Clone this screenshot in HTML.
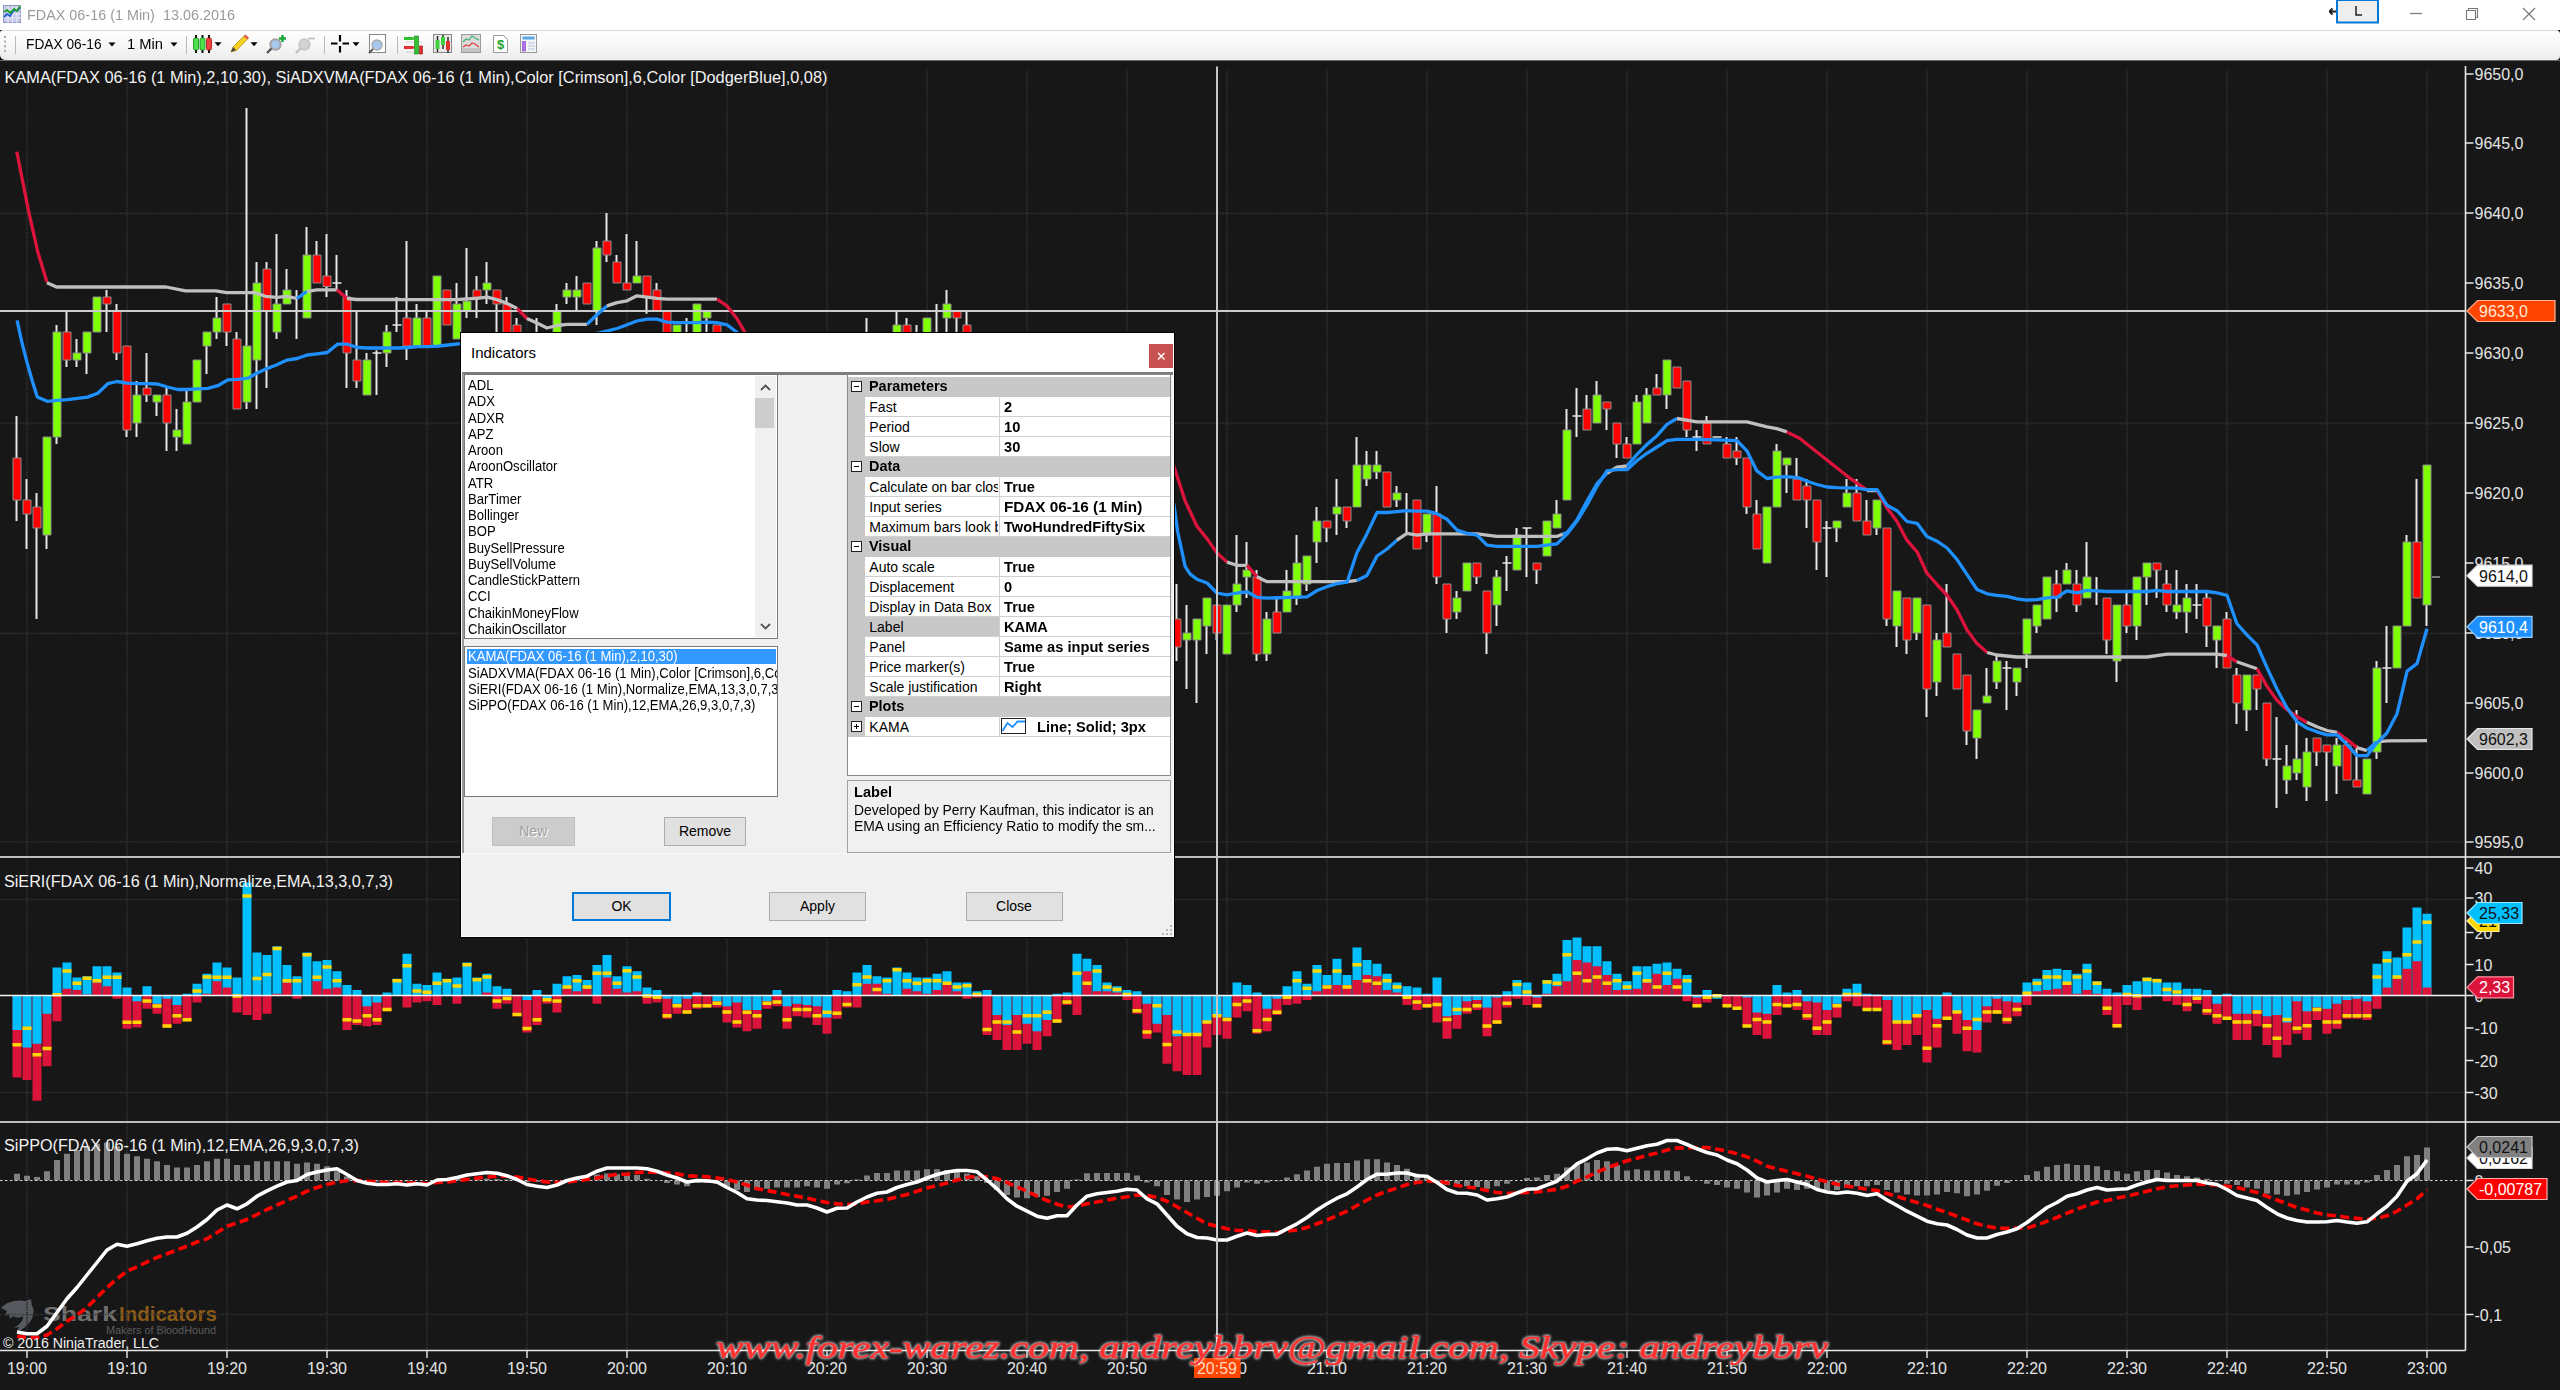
<!DOCTYPE html>
<html><head><meta charset="utf-8"><title>FDAX 06-16 (1 Min)</title>
<style>
html,body{margin:0;padding:0;}
body{width:2560px;height:1390px;overflow:hidden;background:#fff;position:relative;font-family:"Liberation Sans",sans-serif;}
#chart{position:absolute;left:0;top:0;}

#title{position:absolute;left:0;top:0;width:2560px;height:30px;background:#fff;}
#title .t{position:absolute;left:27px;top:4px;font-size:15px;line-height:22px;color:#9a9a9a;white-space:pre;transform-origin:0 50%;}
#tb{position:absolute;left:0;top:30px;width:2560px;height:30px;background:#000;}
#tb .bg{position:absolute;left:0;top:0;width:2560px;height:30px;border-top:1px solid #dcdcdc;box-sizing:border-box;background:linear-gradient(#fefefe,#f7f7f7 50%,#ebebeb);border-radius:3px 4px 4px 5px;}
#tb .tx{position:absolute;top:5px;font-size:15px;line-height:18px;color:#000;white-space:pre;transform-origin:0 50%;}
#tbsvg{position:absolute;left:0;top:0;}


#dlg{position:absolute;left:461px;top:333px;width:713px;height:604px;background:#f0f0f0;font-size:14px;color:#000;box-shadow:0 0 0 1px #000;}
#dlg:after{content:'';position:absolute;left:0;top:0;right:0;bottom:0;border:1px solid #fff;pointer-events:none;}
#dlg .abs{position:absolute;box-sizing:border-box;}
#dlg .ttl{left:0;top:0;width:713px;height:40px;background:#fff;}
#dlg .ttl span{position:absolute;left:10px;top:9.5px;font-size:15px;line-height:20px;}
#dlg .cls{left:688px;top:11px;width:24px;height:24px;background:#c75050;}
#dlg .lb{background:#fff;border:1px solid #7a7a7a;overflow:hidden;}
#dlg .it{position:absolute;left:3.2px;height:16.25px;line-height:16.25px;white-space:pre;transform:scaleX(0.935);transform-origin:0 50%;}
#dlg .btn{background:#e1e1e1;border:1px solid #adadad;text-align:center;line-height:26px;}
#dlg .pg{background:#fff;border:1px solid #8a8a8a;overflow:hidden;}
#dlg .row{position:absolute;left:0;width:323px;height:19px;background:#fff;border-bottom:1px solid #d0d0d0;}
#dlg .dv{position:absolute;left:151px;top:0;width:1px;height:19px;background:#d0d0d0;}
#dlg .cat{background:#c8c8c8;height:20px;border-bottom:0;}
#dlg .cat b{position:absolute;left:21px;top:-0.5px;line-height:20px;transform:scaleX(1.03);transform-origin:0 50%;white-space:pre;}
#dlg .mg{position:absolute;left:0;top:0;width:17px;height:20px;background:#c8c8c8;}
#dlg .nm{position:absolute;left:17px;top:0;width:132.5px;height:19px;background:#fff;overflow:hidden;white-space:pre;line-height:20px;text-indent:4px;}
#dlg .vl{position:absolute;left:152px;top:0;width:170px;height:19px;background:#fff;overflow:hidden;white-space:pre;line-height:20px;font-weight:bold;}
#dlg .vl span{position:absolute;left:4px;top:0;transform:scaleX(1.045);transform-origin:0 50%;}
#dlg .box{position:absolute;left:2.5px;top:4px;width:9px;height:9px;border:1px solid #222;background:#fff;}
#dlg .box:before{content:"";position:absolute;left:2px;top:4px;width:5px;height:1px;background:#000;}
#dlg .plus:after{content:"";position:absolute;left:4px;top:2px;width:1px;height:5px;background:#000;}

</style></head><body>
<svg id="chart" width="2560" height="1390" viewBox="0 0 2560 1390" shape-rendering="auto">
<rect x="0" y="60" width="2560" height="1330" fill="#171717"/>
<path d="M1 1308C6 1302 16 1299 25 1301L31 1299L32 1306C34 1309 34 1312 33 1314C33 1320 27 1326 21 1330L17 1332L19 1327L14 1328C20 1324 24 1320 23 1316C20 1318 16 1318 13 1316L10 1319L9 1314L5 1316L7 1311Z" fill="#565a5e"/>
<text x="43" y="1321" font-family="Liberation Sans, sans-serif" font-size="20.5" font-weight="bold" fill="#707070" textLength="74" lengthAdjust="spacingAndGlyphs">Shark</text>
<text x="119" y="1321" font-family="Liberation Sans, sans-serif" font-size="20.5" font-weight="bold" fill="#8a5a18" textLength="98" lengthAdjust="spacingAndGlyphs">Indicators</text>
<text x="106" y="1334" font-family="Liberation Sans, sans-serif" font-size="10.5" fill="#5c5c5c" textLength="110" lengthAdjust="spacingAndGlyphs">Makers of BloodHound</text>
<rect x="0" y="60" width="2560" height="1" fill="#6a6a6a"/>
<path d="M27 69.500V1350M127 69.500V1350M227 69.500V1350M327 69.500V1350M427 69.500V1350M527 69.500V1350M627 69.500V1350M727 69.500V1350M827 69.500V1350M927 69.500V1350M1027 69.500V1350M1127 69.500V1350M1227 69.500V1350M1327 69.500V1350M1427 69.500V1350M1527 69.500V1350M1627 69.500V1350M1727 69.500V1350M1827 69.500V1350M1927 69.500V1350M2027 69.500V1350M2127 69.500V1350M2227 69.500V1350M2327 69.500V1350M2427 69.500V1350" stroke="#2e2e2e" stroke-width="2" stroke-dasharray="1.25 1.25" fill="none"/>
<path d="M0 213.4H2465M0 423.4H2465M0 633.4H2465M0 842H2465M0 899.5H2465M0 1092.5H2465M0 1314.5H2465" stroke="#343434" stroke-width="1.6" stroke-dasharray="1.25 1.25" fill="none"/>
<path d="M14 1173.8h6V1180.5h-6zM24 1175.8h6V1180.5h-6zM34 1177h6V1180.5h-6zM44 1171.2h6V1180.5h-6zM54 1160h6V1180.5h-6zM64 1153.8h6V1180.5h-6zM74 1150h6V1180.5h-6zM84 1146.2h6V1180.5h-6zM94 1143.8h6V1180.5h-6zM104 1142.5h6V1180.5h-6zM114 1146.2h6V1180.5h-6zM124 1153.8h6V1180.5h-6zM134 1156.2h6V1180.5h-6zM144 1158.8h6V1180.5h-6zM154 1161.2h6V1180.5h-6zM164 1165h6V1180.5h-6zM174 1167.5h6V1180.5h-6zM184 1167.5h6V1180.5h-6zM194 1165h6V1180.5h-6zM204 1161.2h6V1180.5h-6zM214 1158.8h6V1180.5h-6zM224 1158.8h6V1180.5h-6zM234 1165h6V1180.5h-6zM244 1165h6V1180.5h-6zM254 1161.2h6V1180.5h-6zM264 1161.2h6V1180.5h-6zM274 1161.2h6V1180.5h-6zM284 1161.2h6V1180.5h-6zM294 1163.8h6V1180.5h-6zM304 1162.5h6V1180.5h-6zM314 1163.8h6V1180.5h-6zM324 1166.2h6V1180.5h-6zM334 1171.2h6V1180.5h-6zM344 1176.5h6V1180.5h-6zM374 1180.5h6V1181.5h-6zM384 1180.5h6V1181.5h-6zM394 1180.5h6V1181.5h-6zM404 1180.5h6V1181.5h-6zM444 1179.5h6V1180.5h-6zM454 1179h6V1180.5h-6zM464 1178.5h6V1180.5h-6zM474 1178.5h6V1180.5h-6zM484 1178.5h6V1180.5h-6zM494 1179h6V1180.5h-6zM504 1179.5h6V1180.5h-6zM524 1180.5h6V1182h-6zM534 1180.5h6V1182h-6zM544 1180.5h6V1182h-6zM564 1179.5h6V1180.5h-6zM574 1178h6V1180.5h-6zM584 1176.5h6V1180.5h-6zM594 1174.5h6V1180.5h-6zM604 1173.5h6V1180.5h-6zM614 1174.2h6V1180.5h-6zM624 1174.2h6V1180.5h-6zM634 1175h6V1180.5h-6zM644 1178.8h6V1180.5h-6zM664 1180.5h6V1183h-6zM674 1180.5h6V1184.5h-6zM684 1180.5h6V1186.2h-6zM694 1180.5h6V1182.5h-6zM704 1180.5h6V1183h-6zM714 1180.5h6V1183.8h-6zM724 1180.5h6V1186.8h-6zM734 1180.5h6V1190h-6zM744 1180.5h6V1192h-6zM754 1180.5h6V1190h-6zM764 1180.5h6V1188.8h-6zM774 1180.5h6V1187.5h-6zM784 1180.5h6V1187.5h-6zM794 1180.5h6V1187.5h-6zM804 1180.5h6V1186.2h-6zM814 1180.5h6V1187.5h-6zM824 1180.5h6V1188.8h-6zM834 1180.5h6V1184.5h-6zM844 1180.5h6V1183.2h-6zM854 1179.5h6V1180.5h-6zM864 1175.5h6V1180.5h-6zM874 1173h6V1180.5h-6zM884 1173h6V1180.5h-6zM894 1170.5h6V1180.5h-6zM904 1170.5h6V1180.5h-6zM914 1170.5h6V1180.5h-6zM924 1169.2h6V1180.5h-6zM934 1169.2h6V1180.5h-6zM944 1170h6V1180.5h-6zM954 1171.2h6V1180.5h-6zM964 1173.8h6V1180.5h-6zM974 1176.2h6V1180.5h-6zM984 1180.5h6V1183h-6zM994 1180.5h6V1190h-6zM1004 1180.5h6V1195h-6zM1014 1180.5h6V1197.5h-6zM1024 1180.5h6V1198.2h-6zM1034 1180.5h6V1197h-6zM1044 1180.5h6V1195.8h-6zM1054 1180.5h6V1192h-6zM1064 1180.5h6V1188.8h-6zM1074 1179.5h6V1180.5h-6zM1084 1173.2h6V1180.5h-6zM1094 1173h6V1180.5h-6zM1104 1173h6V1180.5h-6zM1114 1173h6V1180.5h-6zM1124 1173h6V1180.5h-6zM1134 1175.5h6V1180.5h-6zM1144 1180.5h6V1182.5h-6zM1154 1180.5h6V1186.2h-6zM1164 1180.5h6V1195h-6zM1174 1180.5h6V1199.5h-6zM1184 1180.5h6V1202h-6zM1194 1180.5h6V1199.5h-6zM1204 1180.5h6V1197h-6zM1214 1180.5h6V1195.8h-6zM1224 1180.5h6V1191.2h-6zM1234 1180.5h6V1187.5h-6zM1244 1180.5h6V1182.5h-6zM1254 1180.5h6V1183.8h-6zM1264 1180.5h6V1182.5h-6zM1274 1180.5h6V1181.2h-6zM1284 1177.5h6V1180.5h-6zM1294 1174.2h6V1180.5h-6zM1304 1170.5h6V1180.5h-6zM1314 1166.8h6V1180.5h-6zM1324 1163.8h6V1180.5h-6zM1334 1163h6V1180.5h-6zM1344 1163h6V1180.5h-6zM1354 1160.5h6V1180.5h-6zM1364 1159.2h6V1180.5h-6zM1374 1159.2h6V1180.5h-6zM1384 1162.5h6V1180.5h-6zM1394 1165h6V1180.5h-6zM1404 1168.8h6V1180.5h-6zM1414 1173.8h6V1180.5h-6zM1424 1176.2h6V1180.5h-6zM1434 1180.5h6V1182h-6zM1444 1180.5h6V1185h-6zM1454 1180.5h6V1186.2h-6zM1464 1180.5h6V1186.2h-6zM1474 1180.5h6V1187h-6zM1484 1180.5h6V1188.8h-6zM1494 1180.5h6V1186.2h-6zM1504 1180.5h6V1183.8h-6zM1524 1178h6V1180.5h-6zM1534 1177.5h6V1180.5h-6zM1544 1175h6V1180.5h-6zM1554 1173.8h6V1180.5h-6zM1564 1167.5h6V1180.5h-6zM1574 1165h6V1180.5h-6zM1584 1162.5h6V1180.5h-6zM1594 1160h6V1180.5h-6zM1604 1161.2h6V1180.5h-6zM1614 1165h6V1180.5h-6zM1624 1170.5h6V1180.5h-6zM1634 1169.2h6V1180.5h-6zM1644 1170.5h6V1180.5h-6zM1654 1170.5h6V1180.5h-6zM1664 1170.5h6V1180.5h-6zM1674 1171.2h6V1180.5h-6zM1684 1176.2h6V1180.5h-6zM1704 1180.5h6V1183.8h-6zM1714 1180.5h6V1185h-6zM1724 1180.5h6V1187.5h-6zM1734 1180.5h6V1188.8h-6zM1744 1180.5h6V1192.5h-6zM1754 1180.5h6V1197.5h-6zM1764 1180.5h6V1195.5h-6zM1774 1180.5h6V1192.5h-6zM1784 1180.5h6V1188.8h-6zM1794 1180.5h6V1190h-6zM1804 1180.5h6V1188.8h-6zM1814 1180.5h6V1190h-6zM1824 1180.5h6V1190h-6zM1834 1180.5h6V1190h-6zM1844 1180.5h6V1187.5h-6zM1854 1180.5h6V1186.2h-6zM1864 1180.5h6V1186.2h-6zM1874 1180.5h6V1185h-6zM1884 1180.5h6V1190h-6zM1894 1180.5h6V1192.5h-6zM1904 1180.5h6V1194.5h-6zM1914 1180.5h6V1195.5h-6zM1924 1180.5h6V1195.5h-6zM1934 1180.5h6V1194.5h-6zM1944 1180.5h6V1192h-6zM1954 1180.5h6V1193.2h-6zM1964 1180.5h6V1196.2h-6zM1974 1180.5h6V1194.5h-6zM1984 1180.5h6V1190.8h-6zM1994 1180.5h6V1185.8h-6zM2004 1180.5h6V1183h-6zM2024 1175h6V1180.5h-6zM2034 1171.2h6V1180.5h-6zM2044 1166.8h6V1180.5h-6zM2054 1165h6V1180.5h-6zM2064 1163.8h6V1180.5h-6zM2074 1165h6V1180.5h-6zM2084 1165h6V1180.5h-6zM2094 1166.2h6V1180.5h-6zM2104 1170h6V1180.5h-6zM2114 1171.2h6V1180.5h-6zM2124 1173.8h6V1180.5h-6zM2134 1171.2h6V1180.5h-6zM2144 1170h6V1180.5h-6zM2154 1170h6V1180.5h-6zM2164 1172.5h6V1180.5h-6zM2174 1175h6V1180.5h-6zM2184 1176.2h6V1180.5h-6zM2194 1177.5h6V1180.5h-6zM2204 1178.8h6V1180.5h-6zM2214 1180.5h6V1181.2h-6zM2224 1180.5h6V1183.8h-6zM2234 1180.5h6V1185h-6zM2244 1180.5h6V1187.5h-6zM2254 1180.5h6V1188.8h-6zM2264 1180.5h6V1193.8h-6zM2274 1180.5h6V1194.5h-6zM2284 1180.5h6V1195.8h-6zM2294 1180.5h6V1194.5h-6zM2304 1180.5h6V1192h-6zM2314 1180.5h6V1189.5h-6zM2324 1180.5h6V1187.5h-6zM2334 1180.5h6V1184.5h-6zM2344 1180.5h6V1184.5h-6zM2354 1180.5h6V1184.5h-6zM2364 1180.5h6V1182.5h-6zM2374 1175h6V1180.5h-6zM2384 1170h6V1180.5h-6zM2394 1165h6V1180.5h-6zM2404 1156.2h6V1180.5h-6zM2414 1155h6V1180.5h-6zM2424 1147.5h6V1180.5h-6z" fill="#808080"/>
<path d="M0 1180.5H2465" stroke="#d0d0d0" stroke-width="1.2" stroke-dasharray="2.5 2.5" fill="none"/>
<path d="M52.5 967.5h9V995.5h-9zM62.5 962.5h9V995.5h-9zM72.5 977.5h9V995.5h-9zM82.5 976.2h9V995.5h-9zM92.5 966.2h9V995.5h-9zM102.5 966.2h9V995.5h-9zM112.5 972.5h9V995.5h-9zM192.5 983.8h9V995.5h-9zM202.5 973.8h9V995.5h-9zM212.5 962.5h9V995.5h-9zM222.5 967.5h9V995.5h-9zM232.5 977.5h9V995.5h-9zM242.5 882.5h9V995.5h-9zM252.5 952.5h9V995.5h-9zM262.5 955h9V995.5h-9zM272.5 946.2h9V995.5h-9zM282.5 965h9V995.5h-9zM292.5 976.2h9V995.5h-9zM302.5 952.5h9V995.5h-9zM312.5 961.2h9V995.5h-9zM322.5 960h9V995.5h-9zM332.5 971.2h9V995.5h-9zM392.5 978.8h9V995.5h-9zM402.5 953.8h9V995.5h-9zM412.5 983.8h9V995.5h-9zM422.5 985h9V995.5h-9zM432.5 972.5h9V995.5h-9zM442.5 978.8h9V995.5h-9zM452.5 977.5h9V995.5h-9zM462.5 962.5h9V995.5h-9zM472.5 977.5h9V995.5h-9zM482.5 973.8h9V995.5h-9zM562.5 976.2h9V995.5h-9zM572.5 975h9V995.5h-9zM582.5 980h9V995.5h-9zM592.5 965h9V995.5h-9zM602.5 955h9V995.5h-9zM612.5 976.2h9V995.5h-9zM622.5 966.2h9V995.5h-9zM632.5 971.2h9V995.5h-9zM852.5 972.5h9V995.5h-9zM862.5 965h9V995.5h-9zM872.5 976.2h9V995.5h-9zM882.5 977.5h9V995.5h-9zM892.5 967.5h9V995.5h-9zM902.5 972.5h9V995.5h-9zM912.5 977.5h9V995.5h-9zM922.5 977.5h9V995.5h-9zM932.5 973.8h9V995.5h-9zM942.5 971.2h9V995.5h-9zM952.5 982.5h9V995.5h-9zM962.5 982.5h9V995.5h-9zM972.5 991.2h9V995.5h-9zM1072.5 953.8h9V995.5h-9zM1082.5 958.8h9V995.5h-9zM1092.5 965h9V995.5h-9zM1102.5 982.5h9V995.5h-9zM1112.5 986.2h9V995.5h-9zM1122.5 990h9V995.5h-9zM1292.5 971.2h9V995.5h-9zM1302.5 983.8h9V995.5h-9zM1312.5 965h9V995.5h-9zM1322.5 975h9V995.5h-9zM1332.5 958.8h9V995.5h-9zM1342.5 975h9V995.5h-9zM1352.5 947.5h9V995.5h-9zM1362.5 960h9V995.5h-9zM1372.5 963.8h9V995.5h-9zM1382.5 973.8h9V995.5h-9zM1392.5 982.5h9V995.5h-9zM1512.5 980h9V995.5h-9zM1522.5 982.5h9V995.5h-9zM1542.5 980h9V995.5h-9zM1552.5 973.8h9V995.5h-9zM1562.5 940h9V995.5h-9zM1572.5 937.5h9V995.5h-9zM1582.5 946.2h9V995.5h-9zM1592.5 946.2h9V995.5h-9zM1602.5 961.2h9V995.5h-9zM1612.5 973.8h9V995.5h-9zM1622.5 981.2h9V995.5h-9zM1632.5 966.2h9V995.5h-9zM1642.5 966.2h9V995.5h-9zM1652.5 963.8h9V995.5h-9zM1662.5 962.5h9V995.5h-9zM1672.5 968.8h9V995.5h-9zM1682.5 975h9V995.5h-9zM1712.5 995.5h9V998.8h-9zM1842.5 988.8h9V995.5h-9zM1852.5 983.8h9V995.5h-9zM2022.5 982.5h9V995.5h-9zM2032.5 978.8h9V995.5h-9zM2042.5 970h9V995.5h-9zM2052.5 968.8h9V995.5h-9zM2062.5 970h9V995.5h-9zM2072.5 973.8h9V995.5h-9zM2082.5 963.8h9V995.5h-9zM2092.5 981.2h9V995.5h-9zM2122.5 985h9V995.5h-9zM2142.5 977.5h9V995.5h-9zM2152.5 978.8h9V995.5h-9zM2162.5 982.5h9V995.5h-9zM2172.5 982.5h9V995.5h-9zM2372.5 963.8h9V995.5h-9zM2382.5 951.2h9V995.5h-9zM2392.5 957.5h9V995.5h-9zM2402.5 927.5h9V995.5h-9zM2412.5 907.5h9V995.5h-9zM2422.5 913.8h9V995.5h-9z" fill="#00BFFF"/>
<path d="M12.5 995.5h9V1077.5h-9zM22.5 995.5h9V1080h-9zM32.5 995.5h9V1100.8h-9zM42.5 995.5h9V1066.2h-9zM122.5 995.5h9V1028.8h-9zM132.5 995.5h9V1027.5h-9zM142.5 995.5h9V1008.8h-9zM152.5 995.5h9V1013.8h-9zM162.5 995.5h9V1027.5h-9zM172.5 995.5h9V1023.8h-9zM182.5 995.5h9V1021.2h-9zM342.5 995.5h9V1030h-9zM352.5 995.5h9V1025h-9zM362.5 995.5h9V1026.2h-9zM372.5 995.5h9V1025h-9zM382.5 995.5h9V1011.2h-9zM492.5 995.5h9V1008.8h-9zM502.5 995.5h9V1003.8h-9zM512.5 995.5h9V1016.2h-9zM522.5 995.5h9V1032.5h-9zM532.5 995.5h9V1025h-9zM542.5 995.5h9V1003.8h-9zM552.5 995.5h9V1012.5h-9zM642.5 995.5h9V1003.8h-9zM652.5 995.5h9V1002.5h-9zM662.5 995.5h9V1018.8h-9zM672.5 995.5h9V1013.8h-9zM682.5 995.5h9V1013.8h-9zM692.5 995.5h9V1008.8h-9zM702.5 995.5h9V1007.5h-9zM712.5 995.5h9V1007.5h-9zM722.5 995.5h9V1022.5h-9zM732.5 995.5h9V1027.5h-9zM742.5 995.5h9V1031.2h-9zM752.5 995.5h9V1028.8h-9zM762.5 995.5h9V1008.8h-9zM772.5 995.5h9V1006.2h-9zM782.5 995.5h9V1028.8h-9zM792.5 995.5h9V1016.2h-9zM802.5 995.5h9V1017.5h-9zM812.5 995.5h9V1025h-9zM822.5 995.5h9V1033.8h-9zM832.5 995.5h9V1018.8h-9zM842.5 995.5h9V1007.5h-9zM982.5 995.5h9V1035h-9zM992.5 995.5h9V1040h-9zM1002.5 995.5h9V1050h-9zM1012.5 995.5h9V1050h-9zM1022.5 995.5h9V1043.8h-9zM1032.5 995.5h9V1050h-9zM1042.5 995.5h9V1036.2h-9zM1052.5 995.5h9V1022.5h-9zM1062.5 995.5h9V1005h-9zM1132.5 995.5h9V1013.8h-9zM1142.5 995.5h9V1038.8h-9zM1152.5 995.5h9V1032.5h-9zM1162.5 995.5h9V1063.8h-9zM1172.5 995.5h9V1071.2h-9zM1182.5 995.5h9V1075h-9zM1192.5 995.5h9V1075h-9zM1202.5 995.5h9V1047.5h-9zM1212.5 995.5h9V1035h-9zM1222.5 995.5h9V1038.8h-9zM1232.5 995.5h9V1017.5h-9zM1242.5 995.5h9V1011.2h-9zM1252.5 995.5h9V1033.8h-9zM1262.5 995.5h9V1031.2h-9zM1272.5 995.5h9V1015h-9zM1282.5 995.5h9V1005h-9zM1402.5 995.5h9V1005h-9zM1412.5 995.5h9V1010h-9zM1422.5 995.5h9V1007.5h-9zM1432.5 995.5h9V1022.5h-9zM1442.5 995.5h9V1038.8h-9zM1452.5 995.5h9V1028.8h-9zM1462.5 995.5h9V1013.8h-9zM1472.5 995.5h9V1010h-9zM1482.5 995.5h9V1036.2h-9zM1492.5 995.5h9V1023.8h-9zM1502.5 995.5h9V1007.5h-9zM1532.5 995.5h9V1007.5h-9zM1692.5 995.5h9V1006.2h-9zM1702.5 995.5h9V1002.5h-9zM1722.5 995.5h9V1006.2h-9zM1732.5 995.5h9V1008.8h-9zM1742.5 995.5h9V1026.2h-9zM1752.5 995.5h9V1035h-9zM1762.5 995.5h9V1038.8h-9zM1772.5 995.5h9V1015h-9zM1782.5 995.5h9V1006.2h-9zM1792.5 995.5h9V1010h-9zM1802.5 995.5h9V1020h-9zM1812.5 995.5h9V1035h-9zM1822.5 995.5h9V1035h-9zM1832.5 995.5h9V1017.5h-9zM1862.5 995.5h9V1010h-9zM1872.5 995.5h9V1010h-9zM1882.5 995.5h9V1045h-9zM1892.5 995.5h9V1050h-9zM1902.5 995.5h9V1045h-9zM1912.5 995.5h9V1035h-9zM1922.5 995.5h9V1062.5h-9zM1932.5 995.5h9V1047.5h-9zM1942.5 995.5h9V1020h-9zM1952.5 995.5h9V1033.8h-9zM1962.5 995.5h9V1051.2h-9zM1972.5 995.5h9V1052.5h-9zM1982.5 995.5h9V1022.5h-9zM1992.5 995.5h9V1013.8h-9zM2002.5 995.5h9V1023.8h-9zM2012.5 995.5h9V1016.2h-9zM2102.5 995.5h9V1015h-9zM2112.5 995.5h9V1027.5h-9zM2132.5 995.5h9V1010h-9zM2182.5 995.5h9V1011.2h-9zM2192.5 995.5h9V1003.8h-9zM2202.5 995.5h9V1015h-9zM2212.5 995.5h9V1023.8h-9zM2222.5 995.5h9V1020h-9zM2232.5 995.5h9V1040h-9zM2242.5 995.5h9V1040h-9zM2252.5 995.5h9V1026.2h-9zM2262.5 995.5h9V1045h-9zM2272.5 995.5h9V1057.5h-9zM2282.5 995.5h9V1045h-9zM2292.5 995.5h9V1033.8h-9zM2302.5 995.5h9V1040h-9zM2312.5 995.5h9V1020h-9zM2322.5 995.5h9V1033.8h-9zM2332.5 995.5h9V1028.8h-9zM2342.5 995.5h9V1018.8h-9zM2352.5 995.5h9V1018.8h-9zM2362.5 995.5h9V1020h-9z" fill="#DC143C"/>
<path d="M12.5 995.5h9V1030h-9zM22.5 995.5h9V1047.5h-9zM32.5 995.5h9V1043.8h-9zM42.5 995.5h9V1013.8h-9zM122.5 987.5h9V995.5h-9zM132.5 995.5h9V1001.2h-9zM142.5 986.2h9V995.5h-9zM152.5 995.5h9V1003.8h-9zM162.5 995.5h9V998.8h-9zM172.5 995.5h9V1005h-9zM182.5 993.8h9V995.5h-9zM342.5 985h9V995.5h-9zM352.5 990h9V995.5h-9zM362.5 995.5h9V1006.2h-9zM372.5 995.5h9V1002.5h-9zM382.5 992.5h9V995.5h-9zM492.5 986.2h9V995.5h-9zM502.5 988.8h9V995.5h-9zM522.5 995.5h9V1000h-9zM532.5 990h9V995.5h-9zM542.5 995.5h9V998.8h-9zM552.5 983.8h9V995.5h-9zM642.5 987.5h9V995.5h-9zM652.5 990h9V995.5h-9zM662.5 995.5h9V998.8h-9zM672.5 995.5h9V1003.8h-9zM682.5 995.5h9V998.8h-9zM692.5 992.5h9V995.5h-9zM712.5 995.5h9V1001.2h-9zM722.5 995.5h9V1006.2h-9zM732.5 995.5h9V1002.5h-9zM742.5 995.5h9V1010h-9zM752.5 995.5h9V1010h-9zM762.5 995.5h9V1001.2h-9zM772.5 990h9V995.5h-9zM782.5 995.5h9V1006.2h-9zM792.5 995.5h9V1003.8h-9zM802.5 995.5h9V1005h-9zM812.5 995.5h9V1006.2h-9zM822.5 995.5h9V1017.5h-9zM832.5 990h9V995.5h-9zM842.5 991.2h9V995.5h-9zM982.5 990h9V995.5h-9zM992.5 995.5h9V1015h-9zM1002.5 995.5h9V1025h-9zM1012.5 995.5h9V1015h-9zM1022.5 995.5h9V1023.8h-9zM1032.5 995.5h9V1031.2h-9zM1042.5 995.5h9V1020h-9zM1052.5 993.8h9V995.5h-9zM1062.5 992.5h9V995.5h-9zM1132.5 991.2h9V995.5h-9zM1142.5 995.5h9V1003.8h-9zM1152.5 995.5h9V1023.8h-9zM1162.5 995.5h9V1015h-9zM1172.5 995.5h9V1036.2h-9zM1182.5 995.5h9V1033.8h-9zM1192.5 995.5h9V1033.8h-9zM1202.5 995.5h9V1022.5h-9zM1212.5 995.5h9V1015h-9zM1222.5 995.5h9V1017.5h-9zM1232.5 982.5h9V995.5h-9zM1242.5 985h9V995.5h-9zM1252.5 992.5h9V995.5h-9zM1262.5 995.5h9V1008.8h-9zM1272.5 995.5h9V998.8h-9zM1282.5 986.2h9V995.5h-9zM1402.5 986.2h9V995.5h-9zM1412.5 987.5h9V995.5h-9zM1422.5 993.8h9V995.5h-9zM1432.5 977.5h9V995.5h-9zM1442.5 995.5h9V1016.2h-9zM1452.5 995.5h9V1015h-9zM1462.5 995.5h9V1001.2h-9zM1472.5 995.5h9V1000h-9zM1482.5 995.5h9V1007.5h-9zM1492.5 995.5h9V997.5h-9zM1502.5 991.2h9V995.5h-9zM1532.5 995.5h9V997.5h-9zM1692.5 995.5h9V997.5h-9zM1702.5 990h9V995.5h-9zM1742.5 995.5h9V997.5h-9zM1752.5 995.5h9V1012.5h-9zM1762.5 995.5h9V1013.8h-9zM1772.5 985h9V995.5h-9zM1782.5 992.5h9V995.5h-9zM1792.5 990h9V995.5h-9zM1802.5 995.5h9V1001.2h-9zM1812.5 995.5h9V1002.5h-9zM1822.5 995.5h9V1010h-9zM1832.5 995.5h9V1003.8h-9zM1862.5 993.8h9V995.5h-9zM1872.5 994.5h9V995.5h-9zM1882.5 995.5h9V1000h-9zM1892.5 995.5h9V1021.2h-9zM1902.5 995.5h9V1021.2h-9zM1912.5 995.5h9V1015h-9zM1922.5 995.5h9V1010h-9zM1932.5 995.5h9V1018.8h-9zM1942.5 992.5h9V995.5h-9zM1952.5 995.5h9V1012.5h-9zM1962.5 995.5h9V1020h-9zM1972.5 995.5h9V1030h-9zM1982.5 995.5h9V1006.2h-9zM1992.5 995.5h9V998.8h-9zM2002.5 995.5h9V1001.2h-9zM2012.5 995.5h9V1002.5h-9zM2102.5 988.8h9V995.5h-9zM2112.5 992.5h9V995.5h-9zM2132.5 981.2h9V995.5h-9zM2182.5 988.8h9V995.5h-9zM2192.5 988.8h9V995.5h-9zM2202.5 990h9V995.5h-9zM2212.5 995.5h9V1003.8h-9zM2222.5 993.8h9V995.5h-9zM2232.5 995.5h9V1013.8h-9zM2242.5 995.5h9V1013.8h-9zM2252.5 995.5h9V1010h-9zM2262.5 995.5h9V1016.2h-9zM2272.5 995.5h9V1015h-9zM2282.5 995.5h9V1022.5h-9zM2292.5 995.5h9V1001.2h-9zM2302.5 995.5h9V1011.2h-9zM2312.5 995.5h9V1007.5h-9zM2322.5 995.5h9V1008.8h-9zM2332.5 995.5h9V1003.8h-9zM2342.5 995.5h9V1000h-9zM2352.5 995.5h9V998.8h-9zM2362.5 995.5h9V1001.2h-9z" fill="#00BFFF"/>
<path d="M52.5 995.5h9V1021.2h-9zM62.5 988.8h9V995.5h-9zM72.5 990h9V995.5h-9zM82.5 994.5h9V995.5h-9zM92.5 982.5h9V995.5h-9zM102.5 986.2h9V995.5h-9zM112.5 995.5h9V998.8h-9zM192.5 995.5h9V1002.5h-9zM202.5 993.8h9V995.5h-9zM212.5 981.2h9V995.5h-9zM222.5 987.5h9V995.5h-9zM232.5 995.5h9V1012.5h-9zM242.5 995.5h9V1015h-9zM252.5 995.5h9V1020h-9zM262.5 995.5h9V1013.8h-9zM272.5 993.8h9V995.5h-9zM282.5 982.5h9V995.5h-9zM292.5 995.5h9V998.8h-9zM312.5 981.2h9V995.5h-9zM322.5 988.8h9V995.5h-9zM332.5 987.5h9V995.5h-9zM402.5 995.5h9V1007.5h-9zM412.5 995.5h9V1002.5h-9zM422.5 995.5h9V1001.2h-9zM432.5 995.5h9V1005h-9zM452.5 995.5h9V1003.8h-9zM482.5 992.5h9V995.5h-9zM562.5 988.8h9V995.5h-9zM572.5 991.2h9V995.5h-9zM582.5 988.8h9V995.5h-9zM592.5 995.5h9V1003.8h-9zM602.5 977.5h9V995.5h-9zM612.5 988.8h9V995.5h-9zM622.5 992.5h9V995.5h-9zM632.5 991.2h9V995.5h-9zM852.5 995.5h9V1007.5h-9zM862.5 983.8h9V995.5h-9zM872.5 983.8h9V995.5h-9zM882.5 993.8h9V995.5h-9zM902.5 988.8h9V995.5h-9zM912.5 991.2h9V995.5h-9zM922.5 993.8h9V995.5h-9zM932.5 990h9V995.5h-9zM942.5 985h9V995.5h-9zM952.5 991.2h9V995.5h-9zM962.5 995.5h9V998.8h-9zM972.5 995.5h9V997.5h-9zM1072.5 995.5h9V1015h-9zM1082.5 971.2h9V995.5h-9zM1092.5 991.2h9V995.5h-9zM1102.5 991.2h9V995.5h-9zM1112.5 992.5h9V995.5h-9zM1122.5 995.5h9V1000h-9zM1292.5 995.5h9V1003.8h-9zM1302.5 995.5h9V1000h-9zM1312.5 991.2h9V995.5h-9zM1322.5 985h9V995.5h-9zM1332.5 985h9V995.5h-9zM1342.5 985h9V995.5h-9zM1352.5 980h9V995.5h-9zM1362.5 975h9V995.5h-9zM1372.5 976.2h9V995.5h-9zM1382.5 990h9V995.5h-9zM1392.5 992.5h9V995.5h-9zM1512.5 995.5h9V998.8h-9zM1522.5 995.5h9V1005h-9zM1542.5 993.8h9V995.5h-9zM1552.5 986.2h9V995.5h-9zM1562.5 981.2h9V995.5h-9zM1572.5 960h9V995.5h-9zM1582.5 962.5h9V995.5h-9zM1592.5 966.2h9V995.5h-9zM1602.5 975h9V995.5h-9zM1612.5 990h9V995.5h-9zM1622.5 990h9V995.5h-9zM1632.5 988.8h9V995.5h-9zM1642.5 982.5h9V995.5h-9zM1652.5 973.8h9V995.5h-9zM1662.5 985h9V995.5h-9zM1672.5 978.8h9V995.5h-9zM1682.5 995.5h9V1001.2h-9zM1842.5 995.5h9V1001.2h-9zM1852.5 995.5h9V1006.2h-9zM2022.5 995.5h9V1005h-9zM2032.5 991.2h9V995.5h-9zM2042.5 990h9V995.5h-9zM2052.5 988.8h9V995.5h-9zM2062.5 985h9V995.5h-9zM2072.5 993.8h9V995.5h-9zM2082.5 990h9V995.5h-9zM2092.5 993.8h9V995.5h-9zM2122.5 995.5h9V1005h-9zM2142.5 995.5h9V997.5h-9zM2162.5 995.5h9V1001.2h-9zM2172.5 995.5h9V1005h-9zM2372.5 995.5h9V1008.8h-9zM2382.5 987.5h9V995.5h-9zM2392.5 978.8h9V995.5h-9zM2402.5 968.8h9V995.5h-9zM2412.5 961.2h9V995.5h-9zM2422.5 987.5h9V995.5h-9z" fill="#DC143C"/>
<path d="M12.5 1043h9v3.5h-9zM22.5 1026.5h9v3.5h-9zM32.5 1053h9v3.5h-9zM42.5 1046.8h9v3.5h-9zM52.5 993h9v3.5h-9zM62.5 969.2h9v3.5h-9zM72.5 981.5h9v3.5h-9zM82.5 976.5h9v3.5h-9zM92.5 979h9v3.5h-9zM102.5 975.5h9v3.5h-9zM112.5 975.5h9v3.5h-9zM122.5 1020.5h9v3.5h-9zM132.5 1020.5h9v3.5h-9zM142.5 999.2h9v3.5h-9zM152.5 1004.2h9v3.5h-9zM162.5 1024.2h9v3.5h-9zM172.5 1014h9v3.5h-9zM182.5 1018h9v3.5h-9zM192.5 989.2h9v3.5h-9zM202.5 975.2h9v3.5h-9zM212.5 975.5h9v3.5h-9zM222.5 975.5h9v3.5h-9zM232.5 994.2h9v3.5h-9zM242.5 894.2h9v3.5h-9zM252.5 976.8h9v3.5h-9zM262.5 972.8h9v3.5h-9zM272.5 946.8h9v3.5h-9zM282.5 979h9v3.5h-9zM292.5 979h9v3.5h-9zM302.5 953h9v3.5h-9zM312.5 975.5h9v3.5h-9zM322.5 965.2h9v3.5h-9zM332.5 979h9v3.5h-9zM342.5 1018h9v3.5h-9zM352.5 1019.2h9v3.5h-9zM362.5 1014h9v3.5h-9zM372.5 1018h9v3.5h-9zM382.5 1007.8h9v3.5h-9zM392.5 979h9v3.5h-9zM402.5 964h9v3.5h-9zM412.5 989.2h9v3.5h-9zM422.5 990.5h9v3.5h-9zM432.5 981.5h9v3.5h-9zM442.5 979h9v3.5h-9zM452.5 984.2h9v3.5h-9zM462.5 963h9v3.5h-9zM472.5 978h9v3.5h-9zM482.5 975.2h9v3.5h-9zM492.5 999.2h9v3.5h-9zM502.5 996.8h9v3.5h-9zM512.5 1012.8h9v3.5h-9zM522.5 1026.8h9v3.5h-9zM532.5 1018h9v3.5h-9zM542.5 998h9v3.5h-9zM552.5 999.2h9v3.5h-9zM562.5 985.2h9v3.5h-9zM572.5 979h9v3.5h-9zM582.5 985.2h9v3.5h-9zM592.5 971.5h9v3.5h-9zM602.5 971.5h9v3.5h-9zM612.5 981.5h9v3.5h-9zM622.5 969h9v3.5h-9zM632.5 975.2h9v3.5h-9zM642.5 994.2h9v3.5h-9zM652.5 995.5h9v3.5h-9zM662.5 1014h9v3.5h-9zM672.5 1004h9v3.5h-9zM682.5 1010.2h9v3.5h-9zM692.5 1004h9v3.5h-9zM702.5 1004h9v3.5h-9zM712.5 1001.5h9v3.5h-9zM722.5 1010.2h9v3.5h-9zM732.5 1020.2h9v3.5h-9zM742.5 1010.5h9v3.5h-9zM752.5 1014h9v3.5h-9zM762.5 1001.5h9v3.5h-9zM772.5 1000.2h9v3.5h-9zM782.5 1018h9v3.5h-9zM792.5 1007.8h9v3.5h-9zM802.5 1007.8h9v3.5h-9zM812.5 1014h9v3.5h-9zM822.5 1010.5h9v3.5h-9zM832.5 1011.5h9v3.5h-9zM842.5 1002.8h9v3.5h-9zM852.5 983h9v3.5h-9zM862.5 975.2h9v3.5h-9zM872.5 987.8h9v3.5h-9zM882.5 979h9v3.5h-9zM892.5 968h9v3.5h-9zM902.5 979h9v3.5h-9zM912.5 981.5h9v3.5h-9zM922.5 979h9v3.5h-9zM932.5 979h9v3.5h-9zM942.5 981.5h9v3.5h-9zM952.5 985.2h9v3.5h-9zM962.5 984h9v3.5h-9zM972.5 992.8h9v3.5h-9zM982.5 1027.8h9v3.5h-9zM992.5 1020.2h9v3.5h-9zM1002.5 1020.2h9v3.5h-9zM1012.5 1030.2h9v3.5h-9zM1022.5 1014h9v3.5h-9zM1032.5 1014h9v3.5h-9zM1042.5 1010.5h9v3.5h-9zM1052.5 1019.2h9v3.5h-9zM1062.5 1000.2h9v3.5h-9zM1072.5 971.5h9v3.5h-9zM1082.5 981.5h9v3.5h-9zM1092.5 969.2h9v3.5h-9zM1102.5 985.2h9v3.5h-9zM1112.5 987.8h9v3.5h-9zM1122.5 992.8h9v3.5h-9zM1132.5 1009h9v3.5h-9zM1142.5 1030.2h9v3.5h-9zM1152.5 1004h9v3.5h-9zM1162.5 1042.8h9v3.5h-9zM1172.5 1030.2h9v3.5h-9zM1182.5 1032.8h9v3.5h-9zM1192.5 1032.8h9v3.5h-9zM1202.5 1020.2h9v3.5h-9zM1212.5 1014h9v3.5h-9zM1222.5 1017.8h9v3.5h-9zM1232.5 1002.8h9v3.5h-9zM1242.5 999.2h9v3.5h-9zM1252.5 1029h9v3.5h-9zM1262.5 1017.8h9v3.5h-9zM1272.5 1010.5h9v3.5h-9zM1282.5 995.5h9v3.5h-9zM1292.5 979h9v3.5h-9zM1302.5 986.5h9v3.5h-9zM1312.5 969.2h9v3.5h-9zM1322.5 985.2h9v3.5h-9zM1332.5 969.2h9v3.5h-9zM1342.5 985.2h9v3.5h-9zM1352.5 963h9v3.5h-9zM1362.5 979h9v3.5h-9zM1372.5 981.5h9v3.5h-9zM1382.5 979h9v3.5h-9zM1392.5 985.2h9v3.5h-9zM1402.5 995.5h9v3.5h-9zM1412.5 1000.2h9v3.5h-9zM1422.5 1004h9v3.5h-9zM1432.5 1002.8h9v3.5h-9zM1442.5 1017.8h9v3.5h-9zM1452.5 1007.8h9v3.5h-9zM1462.5 1007.8h9v3.5h-9zM1472.5 1004h9v3.5h-9zM1482.5 1024.2h9v3.5h-9zM1492.5 1020.2h9v3.5h-9zM1502.5 1001.5h9v3.5h-9zM1512.5 982.8h9v3.5h-9zM1522.5 990.2h9v3.5h-9zM1532.5 1004h9v3.5h-9zM1542.5 980.2h9v3.5h-9zM1552.5 981.5h9v3.5h-9zM1562.5 953h9v3.5h-9zM1572.5 971.5h9v3.5h-9zM1582.5 979h9v3.5h-9zM1592.5 975.2h9v3.5h-9zM1602.5 981.5h9v3.5h-9zM1612.5 979h9v3.5h-9zM1622.5 985.2h9v3.5h-9zM1632.5 971.5h9v3.5h-9zM1642.5 979h9v3.5h-9zM1652.5 985.2h9v3.5h-9zM1662.5 971.5h9v3.5h-9zM1672.5 985.2h9v3.5h-9zM1682.5 979h9v3.5h-9zM1692.5 1004h9v3.5h-9zM1702.5 995.5h9v3.5h-9zM1712.5 994h9v3.5h-9zM1722.5 1004h9v3.5h-9zM1732.5 1006.5h9v3.5h-9zM1742.5 1024.2h9v3.5h-9zM1752.5 1017.8h9v3.5h-9zM1762.5 1020.2h9v3.5h-9zM1772.5 1002.8h9v3.5h-9zM1782.5 1004h9v3.5h-9zM1792.5 1002.8h9v3.5h-9zM1802.5 1014h9v3.5h-9zM1812.5 1026.5h9v3.5h-9zM1822.5 1020.2h9v3.5h-9zM1832.5 1004h9v3.5h-9zM1842.5 992.8h9v3.5h-9zM1852.5 992.8h9v3.5h-9zM1862.5 1007.8h9v3.5h-9zM1872.5 1007.8h9v3.5h-9zM1882.5 1040.2h9v3.5h-9zM1892.5 1020.2h9v3.5h-9zM1902.5 1020.2h9v3.5h-9zM1912.5 1014h9v3.5h-9zM1922.5 1046.5h9v3.5h-9zM1932.5 1024h9v3.5h-9zM1942.5 1016.5h9v3.5h-9zM1952.5 1010.2h9v3.5h-9zM1962.5 1026.5h9v3.5h-9zM1972.5 1017.8h9v3.5h-9zM1982.5 1010.2h9v3.5h-9zM1992.5 1010.2h9v3.5h-9zM2002.5 1017.8h9v3.5h-9zM2012.5 1007.8h9v3.5h-9zM2022.5 991.5h9v3.5h-9zM2032.5 981.5h9v3.5h-9zM2042.5 975.2h9v3.5h-9zM2052.5 975.2h9v3.5h-9zM2062.5 981.5h9v3.5h-9zM2072.5 975.2h9v3.5h-9zM2082.5 969.2h9v3.5h-9zM2092.5 981.5h9v3.5h-9zM2102.5 1006.5h9v3.5h-9zM2112.5 1024h9v3.5h-9zM2122.5 992.8h9v3.5h-9zM2132.5 994h9v3.5h-9zM2142.5 977.8h9v3.5h-9zM2152.5 979h9v3.5h-9zM2162.5 987.8h9v3.5h-9zM2172.5 990.2h9v3.5h-9zM2182.5 1002.8h9v3.5h-9zM2192.5 996.5h9v3.5h-9zM2202.5 1009h9v3.5h-9zM2212.5 1014h9v3.5h-9zM2222.5 1016.5h9v3.5h-9zM2232.5 1020.2h9v3.5h-9zM2242.5 1020.2h9v3.5h-9zM2252.5 1010.2h9v3.5h-9zM2262.5 1024h9v3.5h-9zM2272.5 1036.5h9v3.5h-9zM2282.5 1017.8h9v3.5h-9zM2292.5 1026.5h9v3.5h-9zM2302.5 1024h9v3.5h-9zM2312.5 1007.8h9v3.5h-9zM2322.5 1020.2h9v3.5h-9zM2332.5 1020.2h9v3.5h-9zM2342.5 1014h9v3.5h-9zM2352.5 1014h9v3.5h-9zM2362.5 1014h9v3.5h-9zM2372.5 975.2h9v3.5h-9zM2382.5 959h9v3.5h-9zM2392.5 975.2h9v3.5h-9zM2402.5 953h9v3.5h-9zM2412.5 940.2h9v3.5h-9zM2422.5 920.5h9v3.5h-9z" fill="#FFD700"/>
<path d="M0 995.5H2465" stroke="#f4f4f4" stroke-width="1.6" fill="none"/>
<path d="M16.5 416V521M26.5 479V549M36.5 493V619M46.5 437V549M56.5 325V444M66.5 311V367M76.5 339V367M86.5 332V374M96.5 297V332M106.5 290V332M116.5 304V360M126.5 346V437M136.5 381V437M146.5 353V402M156.5 395V416M166.5 388V451M176.5 409V451M186.5 388V444M196.5 360V402M206.5 332V374M216.5 297V339M226.5 304V346M236.5 332V409M246.5 108V409M256.5 262V409M266.5 262V388M276.5 234V339M286.5 269V304M296.5 290V339M306.5 227V318M316.5 241V283M326.5 234V297M336.5 255V290M346.5 290V388M356.5 311V388M366.5 353V395M376.5 350.2V395M386.5 325V367M396.5 297V332M406.5 241V360M416.5 304V346M426.5 311V346M436.5 276V346M446.5 290V325M456.5 283V339M466.5 248V318M476.5 276V318M486.5 262V304M496.5 290V353M506.5 297V374M516.5 318V367M526.5 339V381M536.5 318V381M546.5 339V374M556.5 304V374M566.5 283V304M576.5 276V311M586.5 283V304M596.5 241V325M606.5 213V262M616.5 255V283M626.5 234V290M636.5 241V283M646.5 276V313.8M656.5 283V311M666.5 311V374M676.5 325V367M686.5 318V374M696.5 304V353M706.5 311V346M716.5 325V346M866.5 318V367M896.5 311V360M906.5 318V360M916.5 325V360M926.5 318V353M936.5 304V353M946.5 290V339M956.5 311V332M966.5 311V353M976.5 332V360M1176.5 584V661M1186.5 605V689M1196.5 619V703M1206.5 598V654M1216.5 605V640M1226.5 605V654M1236.5 535V612M1246.5 542V598M1256.5 570V661M1266.5 612V661M1276.5 598V633M1286.5 570V612M1296.5 535V605M1306.5 556V591M1316.5 507V563M1326.5 521V542M1336.5 479V535M1346.5 507V528M1356.5 437V507M1366.5 451V486M1376.5 451V479M1386.5 472V507M1396.5 486V507M1406.5 493V535M1416.5 500V549M1426.5 514V542M1436.5 486V584M1446.5 584V633M1456.5 591V619M1466.5 563V591M1476.5 563V584M1486.5 591V654M1496.5 570V626M1506.5 556V591M1516.5 528V570M1526.5 528V577M1536.5 563V584M1546.5 521V556M1556.5 500V528M1566.5 409V500M1576.5 388V437M1586.5 395V430M1596.5 381V423M1606.5 402V430M1616.5 423V458M1626.5 437V458M1636.5 395V444M1646.5 388V423M1656.5 374V395M1666.5 360V409M1676.5 367V388M1686.5 381V437M1696.5 430V451M1706.5 416V444M1716.5 437V437M1726.5 437V458M1736.5 437V465M1746.5 458V514M1756.5 500V549M1766.5 507V563M1776.5 444V507M1786.5 458V493M1796.5 458V500M1806.5 479V528M1816.5 500V570M1826.5 521V577M1836.5 521V542M1846.5 479V507M1856.5 479V521M1866.5 500V535M1876.5 500V535M1886.5 528V626M1896.5 591V647M1906.5 598V654M1916.5 598V640M1926.5 605V717M1936.5 633V696M1946.5 584V647M1956.5 654V689M1966.5 675V745M1976.5 710V759M1986.5 668V703M1996.5 654V689M2006.5 661V710M2016.5 668V696M2026.5 619V668M2036.5 605V633M2046.5 577V619M2056.5 570V612M2066.5 563V584M2076.5 570V612M2086.5 542V598M2096.5 577V605M2106.5 598V654M2116.5 605V682M2126.5 591V633M2136.5 577V640M2146.5 563V605M2156.5 563V598M2166.5 570V612M2176.5 570V619M2186.5 584V633M2196.5 584V619M2206.5 591V647M2216.5 626V668M2226.5 612V668M2236.5 668V724M2246.5 675V731M2256.5 675V710M2266.5 703V766M2276.5 717V808M2286.5 745V794M2296.5 710V780M2306.5 738V801M2316.5 738V766M2326.5 745V801M2336.5 738V794M2346.5 738V780M2356.5 745V787M2366.5 759V794M2376.5 661V759M2386.5 626V703M2396.5 626V668M2406.5 535V626M2416.5 479V598M2426.5 465V626" stroke="#e6e6e6" stroke-width="2" fill="none"/>
<path d="M292.5 311h9M332.5 283h9M372.5 353h9M392.5 325h9M1402.5 511.2h9M1502.5 563h9M1522.5 528h9M1572.5 416h9M1692.5 437h9M1712.5 437h9M1822.5 528h9M2002.5 668h9M2092.5 591h9M2192.5 605h9M2272.5 759h9M2382.5 668h9" stroke="#e6e6e6" stroke-width="1.6" fill="none"/>
<path d="M43 437h8V535h-8zM53 332h8V437h-8zM73 353h8V360h-8zM83 332h8V353h-8zM93 297h8V332h-8zM133 395h8V423h-8zM153 395h8V402h-8zM173 430h8V437h-8zM183 402h8V444h-8zM193 360h8V402h-8zM203 332h8V346h-8zM213 318h8V332h-8zM243 346h8V402h-8zM253 283h8V360h-8zM273 304h8V332h-8zM283 290h8V304h-8zM303 255h8V318h-8zM363 360h8V395h-8zM383 332h8V353h-8zM413 318h8V346h-8zM433 276h8V346h-8zM453 304h8V339h-8zM463 301.2h8V311h-8zM483 283h8V290h-8zM533 339h8V367h-8zM553 311h8V367h-8zM563 290h8V297h-8zM573 290h8V297h-8zM593 248h8V311h-8zM633 276h8V283h-8zM673 325h8V353h-8zM693 304h8V339h-8zM703 311h8V318h-8zM893 325h8V353h-8zM923 318h8V353h-8zM943 304h8V318h-8zM1183 633h8V640h-8zM1193 619h8V640h-8zM1203 598h8V626h-8zM1223 605h8V654h-8zM1233 584h8V605h-8zM1243 570h8V577h-8zM1263 619h8V654h-8zM1283 591h8V612h-8zM1293 563h8V598h-8zM1303 556h8V584h-8zM1313 521h8V542h-8zM1333 507h8V514h-8zM1353 465h8V507h-8zM1363 465h8V479h-8zM1373 465h8V472h-8zM1393 493h8V500h-8zM1423 514h8V535h-8zM1453 598h8V612h-8zM1463 563h8V591h-8zM1493 577h8V605h-8zM1513 535h8V570h-8zM1543 521h8V556h-8zM1553 514h8V528h-8zM1563 430h8V500h-8zM1593 395h8V423h-8zM1633 402h8V444h-8zM1643 395h8V423h-8zM1663 360h8V395h-8zM1763 507h8V563h-8zM1773 451h8V507h-8zM1783 458h8V465h-8zM1833 521h8V528h-8zM1843 493h8V507h-8zM1873 500h8V528h-8zM1893 591h8V626h-8zM1913 598h8V633h-8zM1933 640h8V682h-8zM1973 710h8V738h-8zM1983 696h8V703h-8zM1993 661h8V682h-8zM2013 668h8V682h-8zM2023 619h8V654h-8zM2033 605h8V626h-8zM2043 577h8V619h-8zM2063 570h8V584h-8zM2083 577h8V598h-8zM2113 605h8V661h-8zM2133 577h8V626h-8zM2143 563h8V577h-8zM2173 605h8V612h-8zM2183 598h8V612h-8zM2213 626h8V640h-8zM2243 675h8V710h-8zM2283 766h8V780h-8zM2293 759h8V773h-8zM2303 752h8V787h-8zM2333 745h8V766h-8zM2363 759h8V794h-8zM2373 668h8V752h-8zM2393 626h8V668h-8zM2403 542h8V626h-8zM2423 465h8V605h-8z" fill="#7FFF00" stroke="#8c8c8c" stroke-width="1"/>
<path d="M13 458h8V500h-8zM23 500h8V514h-8zM33 507h8V528h-8zM63 332h8V360h-8zM103 297h8V304h-8zM113 311h8V353h-8zM123 346h8V430h-8zM143 388h8V395h-8zM163 395h8V423h-8zM223 304h8V332h-8zM233 339h8V409h-8zM263 269h8V311h-8zM313 255h8V283h-8zM323 276h8V286.5h-8zM343 297h8V353h-8zM353 360h8V381h-8zM403 318h8V346h-8zM423 318h8V346h-8zM443 290h8V325h-8zM473 290h8V297h-8zM493 290h8V304h-8zM503 304h8V367h-8zM513 325h8V353h-8zM523 346h8V367h-8zM543 346h8V367h-8zM583 283h8V304h-8zM603 241h8V255h-8zM613 262h8V283h-8zM623 283h8V290h-8zM643 276h8V297h-8zM653 290h8V311h-8zM663 311h8V367h-8zM683 339h8V367h-8zM713 325h8V339h-8zM863 339h8V353h-8zM903 325h8V353h-8zM913 339h8V353h-8zM933 339h8V353h-8zM953 311h8V318h-8zM963 325h8V353h-8zM973 339h8V353h-8zM1173 619h8V647h-8zM1213 605h8V633h-8zM1253 577h8V654h-8zM1273 612h8V633h-8zM1323 521h8V528h-8zM1343 507h8V521h-8zM1383 472h8V507h-8zM1413 500h8V549h-8zM1433 514h8V577h-8zM1443 584h8V619h-8zM1473 563h8V577h-8zM1483 591h8V633h-8zM1533 563h8V570h-8zM1583 409h8V430h-8zM1603 402h8V409h-8zM1613 423h8V444h-8zM1623 444h8V458h-8zM1653 388h8V395h-8zM1673 367h8V388h-8zM1683 381h8V430h-8zM1703 423h8V444h-8zM1723 444h8V458h-8zM1733 451h8V458h-8zM1743 458h8V507h-8zM1753 514h8V549h-8zM1793 479h8V500h-8zM1803 486h8V500h-8zM1813 500h8V542h-8zM1853 493h8V521h-8zM1863 521h8V535h-8zM1883 528h8V619h-8zM1903 598h8V640h-8zM1923 605h8V689h-8zM1943 633h8V647h-8zM1953 654h8V689h-8zM1963 675h8V731h-8zM2053 584h8V598h-8zM2073 584h8V605h-8zM2103 598h8V640h-8zM2123 605h8V626h-8zM2153 563h8V570h-8zM2163 584h8V605h-8zM2203 598h8V626h-8zM2223 619h8V668h-8zM2233 675h8V703h-8zM2253 675h8V689h-8zM2263 703h8V759h-8zM2313 738h8V752h-8zM2323 745h8V752h-8zM2343 745h8V780h-8zM2353 780h8V787h-8zM2413 542h8V598h-8z" fill="#FF0000" stroke="#8c8c8c" stroke-width="1"/>
<path d="M0 311H2466" stroke="#cdcdcd" stroke-width="2" fill="none"/>
<path d="M16.8 151.7L28.1 208.9L37.8 252.1L47 282.3" stroke="#DC143C" stroke-width="3.3" fill="none" stroke-linejoin="round" stroke-linecap="butt"/>
<path d="M47 282.7L56.5 287L166.2 287L185.6 290.9L215.8 290.9L226.6 292.6L254.6 292.6L265.4 296.3L276.9 297.4L287 296.3L296.9 298.5" stroke="#C0C0C0" stroke-width="3.3" fill="none" stroke-linejoin="round" stroke-linecap="butt"/>
<path d="M296.9 298.5L306.9 291.3" stroke="#1E90FF" stroke-width="3.3" fill="none" stroke-linejoin="round" stroke-linecap="butt"/>
<path d="M306.9 291.3L317 289.8L336.9 289.8" stroke="#C0C0C0" stroke-width="3.3" fill="none" stroke-linejoin="round" stroke-linecap="butt"/>
<path d="M336.9 289.8L347 298.5" stroke="#DC143C" stroke-width="3.3" fill="none" stroke-linejoin="round" stroke-linecap="butt"/>
<path d="M347 298.5L356.9 299.5L399.2 299.5L400 299.6L456.9 299.6L467 298.8L477 298.3L487.1 297.1L496.9 299.6L507 303.4L517.1 308.4" stroke="#C0C0C0" stroke-width="3.3" fill="none" stroke-linejoin="round" stroke-linecap="butt"/>
<path d="M517.1 308.4L526.9 318.5" stroke="#DC143C" stroke-width="3.3" fill="none" stroke-linejoin="round" stroke-linecap="butt"/>
<path d="M526.9 318.5L537 323L547 328L557.1 325.5L566.9 324.3L587.1 324.3" stroke="#C0C0C0" stroke-width="3.3" fill="none" stroke-linejoin="round" stroke-linecap="butt"/>
<path d="M587.1 324.3L596.9 314.7L606.9 305.9" stroke="#1E90FF" stroke-width="3.3" fill="none" stroke-linejoin="round" stroke-linecap="butt"/>
<path d="M606.9 305.9L617 302.6L627.1 300.8L636.9 295.8L647 297.1L657 298.3L666.9 299.1L717 299.1" stroke="#C0C0C0" stroke-width="3.3" fill="none" stroke-linejoin="round" stroke-linecap="butt"/>
<path d="M717 299.1L727 305.9L736.9 318.5L744.9 332.3L752.5 346.2" stroke="#DC143C" stroke-width="3.3" fill="none" stroke-linejoin="round" stroke-linecap="butt"/>
<path d="M1165 435.7L1173.8 465.9L1185.2 501.1L1197 526.3L1207.1 538.9L1216.9 552.7L1227 562.1" stroke="#DC143C" stroke-width="3.3" fill="none" stroke-linejoin="round" stroke-linecap="butt"/>
<path d="M1227 562.1L1237 565.3L1247.1 565.3" stroke="#C0C0C0" stroke-width="3.3" fill="none" stroke-linejoin="round" stroke-linecap="butt"/>
<path d="M1247.1 565.3L1256.9 576.7" stroke="#DC143C" stroke-width="3.3" fill="none" stroke-linejoin="round" stroke-linecap="butt"/>
<path d="M1256.9 576.7L1267 581.7L1347.1 581.7L1356.9 580.4" stroke="#C0C0C0" stroke-width="3.3" fill="none" stroke-linejoin="round" stroke-linecap="butt"/>
<path d="M1356.9 580.4L1366.9 575.4L1377 556L1387.1 549L1396.9 540.2" stroke="#1E90FF" stroke-width="3.3" fill="none" stroke-linejoin="round" stroke-linecap="butt"/>
<path d="M1396.9 540.2L1407 533.4L1417 535.1L1426.9 533.9L1477 533.9L1496.9 536.4L1557 536.4L1562.8 533.9" stroke="#C0C0C0" stroke-width="3.3" fill="none" stroke-linejoin="round" stroke-linecap="butt"/>
<path d="M1562.8 533.9L1567.1 532.6L1576.9 520L1587 501.1L1597.1 483.5L1606.9 473.4" stroke="#1E90FF" stroke-width="3.3" fill="none" stroke-linejoin="round" stroke-linecap="butt"/>
<path d="M1606.9 473.4L1616.9 467.1L1627 465.9" stroke="#C0C0C0" stroke-width="3.3" fill="none" stroke-linejoin="round" stroke-linecap="butt"/>
<path d="M1627 465.9L1636.8 454.6L1646.9 444.5L1657 435.7L1667 424.3L1676.9 418.5" stroke="#1E90FF" stroke-width="3.3" fill="none" stroke-linejoin="round" stroke-linecap="butt"/>
<path d="M1676.9 418.5L1697 421.8L1746.9 421.8L1767 426.9L1776.8 428.6L1786.9 431.9" stroke="#C0C0C0" stroke-width="3.3" fill="none" stroke-linejoin="round" stroke-linecap="butt"/>
<path d="M1786.9 431.9L1799.5 438.2L1850.6 478.7L1867 490.1" stroke="#DC143C" stroke-width="3.3" fill="none" stroke-linejoin="round" stroke-linecap="butt"/>
<path d="M1867 490.6L1877.1 490.6" stroke="#C0C0C0" stroke-width="3.3" fill="none" stroke-linejoin="round" stroke-linecap="butt"/>
<path d="M1877.1 490.6L1886.9 507.7L1897 521.5L1907 540.4L1917.1 551.8L1926.9 573.2L1937 584.5L1947.1 595.3L1956.9 609.7L1966.9 629.8L1977 643.6L1987.1 652.5" stroke="#DC143C" stroke-width="3.3" fill="none" stroke-linejoin="round" stroke-linecap="butt"/>
<path d="M1987.1 652.5L1996.9 655L2017 657L2147 657L2167.1 654.2L2216.9 654.2L2227 655.5" stroke="#C0C0C0" stroke-width="3.3" fill="none" stroke-linejoin="round" stroke-linecap="butt"/>
<path d="M2227 655.5L2236.8 661.8" stroke="#DC143C" stroke-width="3.3" fill="none" stroke-linejoin="round" stroke-linecap="butt"/>
<path d="M2236.8 661.8L2257 668.8" stroke="#C0C0C0" stroke-width="3.3" fill="none" stroke-linejoin="round" stroke-linecap="butt"/>
<path d="M2257 668.8L2267 686.4L2276.9 700.3L2286.9 709.6L2297 716.7L2306.8 722.2" stroke="#DC143C" stroke-width="3.3" fill="none" stroke-linejoin="round" stroke-linecap="butt"/>
<path d="M2306.8 722.2L2316.9 726.7L2327 730.5L2337 732.3" stroke="#C0C0C0" stroke-width="3.3" fill="none" stroke-linejoin="round" stroke-linecap="butt"/>
<path d="M2337 732.3L2346.9 739.3L2356.9 747.6" stroke="#DC143C" stroke-width="3.3" fill="none" stroke-linejoin="round" stroke-linecap="butt"/>
<path d="M2356.9 747.6L2367 750.6" stroke="#C0C0C0" stroke-width="3.3" fill="none" stroke-linejoin="round" stroke-linecap="butt"/>
<path d="M2367 750.6L2376.8 741.8" stroke="#1E90FF" stroke-width="3.3" fill="none" stroke-linejoin="round" stroke-linecap="butt"/>
<path d="M2376.8 741.8L2386.9 740.8L2427 740.6" stroke="#C0C0C0" stroke-width="3.3" fill="none" stroke-linejoin="round" stroke-linecap="butt"/>
<path d="M17.1 320.3L21.4 340.4L27.2 363.1L32.2 380.7L37.3 397.1L47.3 401.3L57.4 400.3L67.5 399.6L77.5 398.3L87.6 397.1L97.7 393.3L107.8 383.7L117.1 381.5L127.1 383.2L137.2 383.7L147.3 383.7L157.4 384L167.4 387L177.5 389.5L187.6 389.5L197.6 388.8L207.7 388.3L217.8 385.7L227.8 379.9L237.9 379.4L248 378.2L256.8 373.2L266.9 368.6L276.9 364.8L287 360.1L297.1 358.5L307.2 355L317.2 353.8L327.3 352.5L337.4 344.2L347.4 344.2L357.5 347.5L367.6 348L377.6 348L387.7 348L397.8 348L407.9 347.5L417.9 346.7L428 346.7L438.1 346.2L448.1 345L460.7 343.7L480 342L520 341L560 339L585 336L601.4 332.3L617 328.5L627.1 324.8L636.9 321L647 319.2L657 319.2L666.9 322.2L676.9 322.7L697.1 322.7L706.9 322.2L717 322.7L727 324.8L736.9 332.3L744.9 341.1" stroke="#1E90FF" stroke-width="3.3" fill="none" stroke-linejoin="round"/>
<path d="M1163.8 481L1173.8 503.6L1177.6 531.3L1185.2 566.6L1190.2 574.1L1197 579.2L1207.1 583L1216.9 593L1227 594.8L1237 593L1247.1 591.8L1256.9 597.3L1267 598.1L1307 596.8L1317.1 590.5L1326.9 586.7L1337 583.7L1347.1 582.2L1356.9 552.7L1366.9 533.9L1377 512.5L1387.1 512.5L1396.9 511.7L1407 510.7L1417 511.2L1426.9 511.2L1436.9 513.7L1447 519.3L1457.1 530.1L1466.9 533.4L1477 535.1L1487 545.2L1496.9 546.4L1536.9 546.4L1547 545.2L1557 543.9L1567.1 533.9L1576.9 521.3L1587 504.9L1597.1 486L1606.9 470.9L1616.9 469.7L1627 469.7L1636.8 460.8L1646.9 453.3L1657 447L1667 440.7L1676.9 439.4L1697 439.4L1716.9 439.9L1737 440.7L1746.9 450.8L1756.9 470.9L1767 478.5L1776.8 477.2L1786.9 476.7L1799.5 478L1807.1 481.3L1816.9 484.5L1827 487L1837 487.6L1856.9 488.1L1867 489.6L1877.1 489.6L1886.9 505.2L1897 510.7L1907 521.5L1917.1 523.3L1926.9 536.6L1937 541.2L1947.1 548L1956.9 559.3L1966.9 574.4L1977 589.5L1987.1 593.8L1996.9 595.3L2007 596.3L2017 598.8L2026.9 600.1L2036.9 599.6L2047 597.8L2057.1 597.1L2066.9 590.8L2077 592.8L2087 590.3L2096.9 590.8L2106.9 591.5L2117 591.5L2147 591.5L2157 590.3L2167.1 591.5L2206.9 591.5L2216.9 592.8L2227 595.3L2236.8 623.5L2246.9 634.8L2257 644.9L2267 667.6L2276.9 689L2286.9 707.8L2297 721.7L2306.8 728L2316.9 731.8L2327 734.8L2337 734.8L2346.9 744.4L2356.9 755.7L2367 755.7L2376.8 743.1L2386.9 733L2397.1 713.4L2407.1 671.1L2417 663.6L2427 628.8" stroke="#1E90FF" stroke-width="3.3" fill="none" stroke-linejoin="round"/>
<path d="M17 1336.2L27 1337.5L37 1337.5L47 1335L57 1328.8L67 1321.2L77 1315L87 1307.5L97 1297.5L107 1287.5L117 1278.8L127 1271.2L137 1266.8L147 1262L157 1257.5L167 1253.8L177 1250L187 1246.2L197 1242L207 1238.8L217 1232.5L227 1226.2L237 1223L247 1219.5L257 1214.5L267 1209.5L277 1205L287 1200.5L297 1196.2L307 1191.2L317 1187.5L327 1184.5L337 1182L347 1180.8L357 1180.5L367 1181.2L377 1182L387 1182.5L397 1182.5L407 1183L417 1183L427 1183.8L437 1182.5L447 1182L457 1180.8L467 1179.5L477 1178L487 1177L497 1176.2L507 1176.2L517 1177L527 1178.8L537 1180.5L547 1182L557 1182.5L567 1182L577 1180.8L587 1179.5L597 1178L607 1175.8L617 1174.2L627 1174.2L637 1172.5L647 1172L657 1172.5L667 1173L677 1173.8L687 1175.8L697 1176.2L707 1176.8L717 1178L727 1179.5L737 1182L747 1185L757 1188.8L767 1190.5L777 1192.5L787 1194.5L797 1196.2L807 1198.2L817 1200.5L827 1202.5L837 1203.8L847 1204.5L857 1203.8L867 1202L877 1200.8L887 1199.2L897 1197L907 1194.5L917 1191.2L927 1188L937 1185.5L947 1183L957 1180L967 1177.5L977 1176.2L987 1176.8L997 1178.8L1007 1182.5L1017 1187L1027 1191.2L1037 1196.2L1047 1200.5L1057 1204.2L1067 1207L1077 1206.2L1087 1203.8L1097 1202L1107 1200L1117 1198.2L1127 1196.8L1137 1195L1147 1195.5L1157 1197.5L1167 1201.2L1177 1206.8L1187 1212.5L1197 1218.2L1207 1223.8L1217 1226.2L1227 1228.8L1237 1230.5L1247 1230.5L1257 1231.8L1267 1231.8L1277 1232.5L1287 1231.2L1297 1230L1307 1227.5L1317 1223.8L1327 1220L1337 1215.5L1347 1211.2L1357 1205.5L1367 1200L1377 1195L1387 1191.2L1397 1188.2L1407 1184.5L1417 1182.5L1427 1181.2L1437 1181.2L1447 1183L1457 1185.5L1467 1187L1477 1188.2L1487 1190.5L1497 1192.5L1507 1193.2L1517 1193.2L1527 1192.5L1537 1192L1547 1190.8L1557 1189.2L1567 1186.2L1577 1181.2L1587 1177L1597 1172L1607 1168L1617 1164.2L1627 1160.8L1637 1158.2L1647 1155.5L1657 1153L1667 1150L1677 1148L1687 1148L1697 1147.5L1707 1147.5L1717 1149.2L1727 1151.2L1737 1153.8L1747 1156.8L1757 1161.2L1767 1166.2L1777 1168.8L1787 1171.2L1797 1173.8L1807 1176.2L1817 1179.2L1827 1181.8L1837 1184.2L1847 1186.2L1857 1187.5L1867 1189.2L1877 1190.5L1887 1193.5L1897 1196.5L1907 1199.5L1917 1202.5L1927 1205.5L1937 1209.2L1947 1212.5L1957 1216.2L1967 1220L1977 1223.8L1987 1226.2L1997 1228.2L2007 1228.2L2017 1228L2027 1228L2037 1225L2047 1221.2L2057 1217.5L2067 1213.2L2077 1209.2L2087 1205.5L2097 1202L2107 1200.5L2117 1198L2127 1196.2L2137 1193.8L2147 1191.2L2157 1188.8L2167 1186.8L2177 1185.8L2187 1185L2197 1184.2L2207 1184.5L2217 1185L2227 1186.2L2237 1187.5L2247 1190L2257 1192.5L2267 1196.2L2277 1200L2287 1203.8L2297 1207.5L2307 1210L2317 1213L2327 1215L2337 1215.8L2347 1217.5L2357 1218.2L2367 1219.5L2377 1218.2L2387 1215.8L2397 1211.2L2407 1205L2417 1198.8L2427 1190" stroke="#FF0000" stroke-width="3.6" stroke-dasharray="9 4.5" fill="none" stroke-linejoin="round"/>
<path d="M17 1332L27 1333.8L37 1333.8L47 1326.2L57 1312.5L67 1298.8L77 1287.5L87 1275L97 1262.5L107 1250L117 1244.2L127 1246.2L137 1243.8L147 1240.8L157 1238.2L167 1237L177 1237L187 1233.2L197 1227L207 1219.5L217 1210L227 1205L237 1208.8L247 1203.8L257 1196.2L267 1190.8L277 1186.2L287 1182L297 1180.5L307 1174.5L317 1172L327 1170L337 1168.8L347 1174.5L357 1180.5L367 1183.2L377 1184.5L387 1184.5L397 1183.8L407 1185L417 1183.8L427 1185L437 1180L447 1179.5L457 1177.5L467 1175L477 1173.8L487 1172.5L497 1173.2L507 1175.8L517 1179.5L527 1184.5L537 1186.2L547 1187.5L557 1185L567 1180.5L577 1178L587 1176.2L597 1171.2L607 1168L617 1168L627 1168L637 1168L647 1168.8L657 1171.2L667 1175L677 1178L687 1182L697 1180.5L707 1180.8L717 1182L727 1187.5L737 1192.5L747 1198.8L757 1200L767 1200.5L777 1201.8L787 1203L797 1205L807 1205L817 1208L827 1212L837 1208.2L847 1208L857 1202L867 1197L877 1193.2L887 1192L897 1187.5L907 1184.5L917 1182L927 1178L937 1174.5L947 1172L957 1170.5L967 1170.5L977 1171.8L987 1180L997 1188.8L1007 1198.8L1017 1206.2L1027 1211.2L1037 1216.2L1047 1218.2L1057 1215.8L1067 1215.8L1077 1205L1087 1196.2L1097 1193.8L1107 1192.5L1117 1191.2L1127 1189.2L1137 1190L1147 1198.8L1157 1203.8L1167 1215L1177 1226.2L1187 1233.8L1197 1237.5L1207 1238L1217 1240L1227 1240L1237 1236.2L1247 1233L1257 1235.5L1267 1234.5L1277 1234.2L1287 1228.8L1297 1223.8L1307 1217.5L1317 1210L1327 1203.8L1337 1198.2L1347 1193.8L1357 1187L1367 1179.5L1377 1174.2L1387 1174.2L1397 1173L1407 1173L1417 1175.8L1427 1176.2L1437 1182.5L1447 1189.5L1457 1193L1467 1193.2L1477 1195L1487 1200L1497 1198.8L1507 1197L1517 1193L1527 1189.2L1537 1188.8L1547 1185L1557 1181.2L1567 1172.5L1577 1163.8L1587 1158.8L1597 1153L1607 1149.2L1617 1148.8L1627 1150.8L1637 1148.2L1647 1145.8L1657 1144.2L1667 1140.5L1677 1140.5L1687 1144.5L1697 1148.8L1707 1152.5L1717 1155L1727 1160L1737 1163.8L1747 1170L1757 1178L1767 1182L1777 1180.5L1787 1179.5L1797 1182L1807 1184.5L1817 1189.5L1827 1192L1837 1193.2L1847 1192L1857 1193.2L1867 1195.5L1877 1193.8L1887 1200L1897 1205.5L1907 1211.2L1917 1216.2L1927 1221.2L1937 1223.8L1947 1225L1957 1229.5L1967 1235L1977 1238L1987 1238L1997 1234.5L2007 1232L2017 1228.8L2027 1222.5L2037 1215L2047 1207.5L2057 1202.5L2067 1196.2L2077 1193.8L2087 1190L2097 1187.5L2107 1190L2117 1189.2L2127 1188.8L2137 1185L2147 1182L2157 1179.5L2167 1180.5L2177 1180.5L2187 1180.5L2197 1180.5L2207 1183L2217 1184.5L2227 1189.5L2237 1195.5L2247 1198L2257 1200.5L2267 1207.5L2277 1213.8L2287 1218L2297 1220.5L2307 1222L2317 1222L2327 1221.8L2337 1220.5L2347 1222L2357 1223.2L2367 1221.8L2377 1213.8L2387 1206.2L2397 1196.2L2407 1181.2L2417 1173.8L2427 1160" stroke="#FFFFFF" stroke-width="3.6" fill="none" stroke-linejoin="round"/>
<path d="M0 857H2560M0 1122H2560" stroke="#bebebe" stroke-width="2" fill="none"/>
<path d="M0 1350.5H2465.5" stroke="#e8e8e8" stroke-width="1.4" fill="none"/>
<path d="M2465.5 66V1350.5" stroke="#e8e8e8" stroke-width="1.6" fill="none"/>
<path d="M1217 66.500V1350" stroke="#c6c6c6" stroke-width="2" fill="none"/>
<path d="M27 1350v8M127 1350v8M227 1350v8M327 1350v8M427 1350v8M527 1350v8M627 1350v8M727 1350v8M827 1350v8M927 1350v8M1027 1350v8M1127 1350v8M1227 1350v8M1327 1350v8M1427 1350v8M1527 1350v8M1627 1350v8M1727 1350v8M1827 1350v8M1927 1350v8M2027 1350v8M2127 1350v8M2227 1350v8M2327 1350v8M2427 1350v8" stroke="#e8e8e8" stroke-width="1.4" fill="none"/>
<text x="2474.5" y="80" font-family="Liberation Sans, sans-serif" font-size="16" fill="#e4e4e4">9650,0</text>
<text x="2474.5" y="149" font-family="Liberation Sans, sans-serif" font-size="16" fill="#e4e4e4">9645,0</text>
<text x="2474.5" y="219" font-family="Liberation Sans, sans-serif" font-size="16" fill="#e4e4e4">9640,0</text>
<text x="2474.5" y="289" font-family="Liberation Sans, sans-serif" font-size="16" fill="#e4e4e4">9635,0</text>
<text x="2474.5" y="359" font-family="Liberation Sans, sans-serif" font-size="16" fill="#e4e4e4">9630,0</text>
<text x="2474.5" y="429" font-family="Liberation Sans, sans-serif" font-size="16" fill="#e4e4e4">9625,0</text>
<text x="2474.5" y="499" font-family="Liberation Sans, sans-serif" font-size="16" fill="#e4e4e4">9620,0</text>
<text x="2474.5" y="569" font-family="Liberation Sans, sans-serif" font-size="16" fill="#e4e4e4">9615,0</text>
<text x="2474.5" y="639" font-family="Liberation Sans, sans-serif" font-size="16" fill="#e4e4e4">9610,0</text>
<text x="2474.5" y="709" font-family="Liberation Sans, sans-serif" font-size="16" fill="#e4e4e4">9605,0</text>
<text x="2474.5" y="779" font-family="Liberation Sans, sans-serif" font-size="16" fill="#e4e4e4">9600,0</text>
<text x="2474.5" y="848" font-family="Liberation Sans, sans-serif" font-size="16" fill="#e4e4e4">9595,0</text>
<text x="2474.5" y="874" font-family="Liberation Sans, sans-serif" font-size="16" fill="#e4e4e4">40</text>
<text x="2474.5" y="904" font-family="Liberation Sans, sans-serif" font-size="16" fill="#e4e4e4">30</text>
<text x="2474.5" y="938.5" font-family="Liberation Sans, sans-serif" font-size="16" fill="#e4e4e4">20</text>
<text x="2474.5" y="970.5" font-family="Liberation Sans, sans-serif" font-size="16" fill="#e4e4e4">10</text>
<text x="2474.5" y="1001.5" font-family="Liberation Sans, sans-serif" font-size="16" fill="#e4e4e4">0</text>
<text x="2474.5" y="1034" font-family="Liberation Sans, sans-serif" font-size="16" fill="#e4e4e4">-10</text>
<text x="2474.5" y="1066.5" font-family="Liberation Sans, sans-serif" font-size="16" fill="#e4e4e4">-20</text>
<text x="2474.5" y="1098.5" font-family="Liberation Sans, sans-serif" font-size="16" fill="#e4e4e4">-30</text>
<text x="2474.5" y="1186.5" font-family="Liberation Sans, sans-serif" font-size="16" fill="#e4e4e4">0</text>
<text x="2474.5" y="1253" font-family="Liberation Sans, sans-serif" font-size="16" fill="#e4e4e4">-0,05</text>
<text x="2474.5" y="1320.5" font-family="Liberation Sans, sans-serif" font-size="16" fill="#e4e4e4">-0,1</text>
<path d="M2465.5 74h8M2465.5 143h8M2465.5 213h8M2465.5 283h8M2465.5 353h8M2465.5 423h8M2465.5 493h8M2465.5 563h8M2465.5 633h8M2465.5 703h8M2465.5 773h8M2465.5 842h8M2465.5 868h8M2465.5 898h8M2465.5 932.5h8M2465.5 964.5h8M2465.5 995.5h8M2465.5 1028h8M2465.5 1060.5h8M2465.5 1092.5h8M2465.5 1180.5h8M2465.5 1247h8M2465.5 1314.5h8" stroke="#e8e8e8" stroke-width="1.4" fill="none"/>
<text x="27" y="1373.5" text-anchor="middle" font-family="Liberation Sans, sans-serif" font-size="16" fill="#e4e4e4">19:00</text>
<text x="127" y="1373.5" text-anchor="middle" font-family="Liberation Sans, sans-serif" font-size="16" fill="#e4e4e4">19:10</text>
<text x="227" y="1373.5" text-anchor="middle" font-family="Liberation Sans, sans-serif" font-size="16" fill="#e4e4e4">19:20</text>
<text x="327" y="1373.5" text-anchor="middle" font-family="Liberation Sans, sans-serif" font-size="16" fill="#e4e4e4">19:30</text>
<text x="427" y="1373.5" text-anchor="middle" font-family="Liberation Sans, sans-serif" font-size="16" fill="#e4e4e4">19:40</text>
<text x="527" y="1373.5" text-anchor="middle" font-family="Liberation Sans, sans-serif" font-size="16" fill="#e4e4e4">19:50</text>
<text x="627" y="1373.5" text-anchor="middle" font-family="Liberation Sans, sans-serif" font-size="16" fill="#e4e4e4">20:00</text>
<text x="727" y="1373.5" text-anchor="middle" font-family="Liberation Sans, sans-serif" font-size="16" fill="#e4e4e4">20:10</text>
<text x="827" y="1373.5" text-anchor="middle" font-family="Liberation Sans, sans-serif" font-size="16" fill="#e4e4e4">20:20</text>
<text x="927" y="1373.5" text-anchor="middle" font-family="Liberation Sans, sans-serif" font-size="16" fill="#e4e4e4">20:30</text>
<text x="1027" y="1373.5" text-anchor="middle" font-family="Liberation Sans, sans-serif" font-size="16" fill="#e4e4e4">20:40</text>
<text x="1127" y="1373.5" text-anchor="middle" font-family="Liberation Sans, sans-serif" font-size="16" fill="#e4e4e4">20:50</text>
<text x="1227" y="1373.5" text-anchor="middle" font-family="Liberation Sans, sans-serif" font-size="16" fill="#e4e4e4">21:00</text>
<text x="1327" y="1373.5" text-anchor="middle" font-family="Liberation Sans, sans-serif" font-size="16" fill="#e4e4e4">21:10</text>
<text x="1427" y="1373.5" text-anchor="middle" font-family="Liberation Sans, sans-serif" font-size="16" fill="#e4e4e4">21:20</text>
<text x="1527" y="1373.5" text-anchor="middle" font-family="Liberation Sans, sans-serif" font-size="16" fill="#e4e4e4">21:30</text>
<text x="1627" y="1373.5" text-anchor="middle" font-family="Liberation Sans, sans-serif" font-size="16" fill="#e4e4e4">21:40</text>
<text x="1727" y="1373.5" text-anchor="middle" font-family="Liberation Sans, sans-serif" font-size="16" fill="#e4e4e4">21:50</text>
<text x="1827" y="1373.5" text-anchor="middle" font-family="Liberation Sans, sans-serif" font-size="16" fill="#e4e4e4">22:00</text>
<text x="1927" y="1373.5" text-anchor="middle" font-family="Liberation Sans, sans-serif" font-size="16" fill="#e4e4e4">22:10</text>
<text x="2027" y="1373.5" text-anchor="middle" font-family="Liberation Sans, sans-serif" font-size="16" fill="#e4e4e4">22:20</text>
<text x="2127" y="1373.5" text-anchor="middle" font-family="Liberation Sans, sans-serif" font-size="16" fill="#e4e4e4">22:30</text>
<text x="2227" y="1373.5" text-anchor="middle" font-family="Liberation Sans, sans-serif" font-size="16" fill="#e4e4e4">22:40</text>
<text x="2327" y="1373.5" text-anchor="middle" font-family="Liberation Sans, sans-serif" font-size="16" fill="#e4e4e4">22:50</text>
<text x="2427" y="1373.5" text-anchor="middle" font-family="Liberation Sans, sans-serif" font-size="16" fill="#e4e4e4">23:00</text>
<path d="M2467 311L2477.5 300.5H2555V321.5H2477.5z" fill="#FF4500" stroke="#ffb090" stroke-width="1.2"/>
<text x="2479" y="317" font-family="Liberation Sans, sans-serif" font-size="16" fill="#ffe8d8">9633,0</text>
<path d="M2467 575.7L2477.5 565.2H2532V586.2H2477.5z" fill="#FFFFFF" stroke="#e0e0e0" stroke-width="1.2"/>
<text x="2479" y="581.7" font-family="Liberation Sans, sans-serif" font-size="16" fill="#111">9614,0</text>
<path d="M2467 739L2477.5 728.5H2532V749.5H2477.5z" fill="#C0C0C0" stroke="#e8e8e8" stroke-width="1.2"/>
<text x="2479" y="745" font-family="Liberation Sans, sans-serif" font-size="16" fill="#111">9602,3</text>
<path d="M2467 626.8L2477.5 616.3H2532V637.3H2477.5z" fill="#1E90FF" stroke="#9ccfff" stroke-width="1.2"/>
<text x="2479" y="632.8" font-family="Liberation Sans, sans-serif" font-size="16" fill="#fff">9610,4</text>
<path d="M2467 921L2477.5 910.5H2499V931.5H2477.5z" fill="#FFD700" stroke="#fff0a0" stroke-width="1.2"/>
<text x="2479" y="927" font-family="Liberation Sans, sans-serif" font-size="16" fill="#111">21</text>
<path d="M2467 913L2477.5 902.5H2522V923.5H2477.5z" fill="#00BFFF" stroke="#a0e8ff" stroke-width="1.2"/>
<text x="2479" y="919" font-family="Liberation Sans, sans-serif" font-size="16" fill="#111">25,33</text>
<path d="M2467 987.3L2477.5 976.8H2513.5V997.8H2477.5z" fill="#DC143C" stroke="#ff90a0" stroke-width="1.2"/>
<text x="2479" y="993.3" font-family="Liberation Sans, sans-serif" font-size="16" fill="#fff">2,33</text>
<path d="M2467 1158L2477.5 1147.5H2532V1168.5H2477.5z" fill="#FFFFFF" stroke="#e0e0e0" stroke-width="1.2"/>
<text x="2479" y="1164" font-family="Liberation Sans, sans-serif" font-size="16" fill="#111">0,0162</text>
<path d="M2467 1147L2477.5 1136.5H2532V1157.5H2477.5z" fill="#808080" stroke="#c8c8c8" stroke-width="1.2"/>
<text x="2479" y="1153" font-family="Liberation Sans, sans-serif" font-size="16" fill="#111">0,0241</text>
<path d="M2467 1189L2477.5 1178.5H2547V1199.5H2477.5z" fill="#FF0000" stroke="#ffb0b0" stroke-width="1.2"/>
<text x="2479" y="1195" font-family="Liberation Sans, sans-serif" font-size="16" fill="#fff">-0,00787</text>
<path d="M2432 577h8" stroke="#bbb" stroke-width="1.2"/>
<rect x="1194" y="1358" width="46.500" height="20" fill="#FF4500"/>
<text x="1217" y="1373.5" text-anchor="middle" font-family="Liberation Sans, sans-serif" font-size="16" fill="#ffd8c0">20:59</text>
<text x="4.5" y="82.5" font-family="Liberation Sans, sans-serif" font-size="16" fill="#f2f2f2" textLength="823" lengthAdjust="spacingAndGlyphs">KAMA(FDAX 06-16 (1 Min),2,10,30), SiADXVMA(FDAX 06-16 (1 Min),Color [Crimson],6,Color [DodgerBlue],0,08)</text>
<text x="4" y="886.5" font-family="Liberation Sans, sans-serif" font-size="16" fill="#f2f2f2" textLength="389" lengthAdjust="spacingAndGlyphs">SiERI(FDAX 06-16 (1 Min),Normalize,EMA,13,3,0,7,3)</text>
<text x="4" y="1151" font-family="Liberation Sans, sans-serif" font-size="16" fill="#f2f2f2" textLength="355" lengthAdjust="spacingAndGlyphs">SiPPO(FDAX 06-16 (1 Min),12,EMA,26,9,3,0,7,3)</text>
<text x="3" y="1347.5" font-family="Liberation Sans, sans-serif" font-size="14" fill="#f0f0f0" textLength="156" lengthAdjust="spacingAndGlyphs">© 2016 NinjaTrader, LLC</text>
<text x="716" y="1357.5" font-family="Liberation Serif, serif" font-style="italic" font-size="32" fill="#ff3030" stroke="#ff3030" stroke-width="0.5" textLength="1112" lengthAdjust="spacingAndGlyphs" style="filter:drop-shadow(0 0 1.5px rgba(255,255,255,.85)) drop-shadow(0 0 1px rgba(255,255,255,.6))">www.forex-warez.com, andreybbrv@gmail.com, Skype: andreybbrv</text>
</svg>

<div id="title"><span class="t" id="ttl" style="transform:scaleX(0.959)">FDAX 06-16 (1 Min)  13.06.2016</span></div>
<div id="tb"><div class="bg"></div>
<span class="tx" id="tx1" style="left:25.5px;transform:scaleX(0.915)">FDAX 06-16</span>
<span class="tx" id="tx2" style="left:127px;transform:scaleX(0.981)">1 Min</span>
</div>
<svg id="tbsvg" width="2560" height="60" viewBox="0 0 2560 60">
<g><rect x="3.5" y="5.5" width="17" height="17" fill="#c8cce8" stroke="#8f97c4"/><path d="M4 10h17M4 14h17M4 18h17M8 6v17M12.5 6v17M17 6v17" stroke="#e8eaf6" stroke-width="1"/><path d="M4 17l3-3 3 2 4-6 3 1 3-3" stroke="#2060d0" stroke-width="1.8" fill="none"/><path d="M4 12l3-2 3 3 4-4 3 2 3-5" stroke="#20a030" stroke-width="1.8" fill="none"/></g>
<path d="M2329 11.5h7M2329.5 11.5l3-3M2329.5 11.5l3 3" stroke="#222" stroke-width="1.8" fill="none"/>
<rect x="2337" y="0" width="41" height="22.5" fill="#eee" stroke="#0078d7" stroke-width="2"/>
<path d="M2356 6v9h6" stroke="#222" stroke-width="1.5" fill="none"/>
<path d="M2410 13.5h12" stroke="#777" stroke-width="1.2"/>
<path d="M2466.5 10.5h9v9h-9zM2468.5 10.5v-2h9v9h-2" stroke="#777" stroke-width="1.1" fill="none"/>
<path d="M2523 8l12 12M2535 8l-12 12" stroke="#777" stroke-width="1.2"/>
<path d="M5 36v16" stroke="#aaa" stroke-width="2" stroke-dasharray="2 2.6"/>
<path d="M15.5 36v18M186.5 36v18M324.5 36v18M397.5 36v18" stroke="#b8b8b8" stroke-width="1"/>
<path d="M108.5 42.5h7l-3.5 4z" fill="#000"/>
<path d="M170.5 42.5h7l-3.5 4z" fill="#000"/>
<path d="M214.5 42.3h7l-3.5 4z" fill="#000"/>
<path d="M250.5 42.3h7l-3.5 4z" fill="#000"/>
<path d="M352.5 42.3h7l-3.5 4z" fill="#000"/>
<path d="M196 35v18" stroke="#111" stroke-width="2"/><rect x="193.5" y="38" width="5" height="12" rx="1.5" fill="#4fe04f" stroke="#0a8a0a" stroke-width="0.8"/>
<path d="M202.5 35v18" stroke="#111" stroke-width="2"/><rect x="200.0" y="38" width="5" height="12" rx="1.5" fill="#4fe04f" stroke="#0a8a0a" stroke-width="0.8"/>
<path d="M209 35v18" stroke="#111" stroke-width="2"/><rect x="206.5" y="38" width="5" height="12" rx="1.5" fill="#f04040" stroke="#a01010" stroke-width="0.8"/>
<path d="M231 52l2-5 12-12 3.5 3-12 12.5z" fill="#f5d020" stroke="#b89010" stroke-width="0.8"/><path d="M231 52l2-5 3 3z" fill="#444"/><path d="M244.5 35.5l3.5 3" stroke="#e06060" stroke-width="2.5"/>
<circle cx="275.500" cy="44.500" r="5.2" fill="#a8c8f0" stroke="#a4a4a4" stroke-width="2"/><path d="M271.500 48.500l-4.500 4.500" stroke="#555" stroke-width="2.4"/><path d="M279 38.500h7M282.500 35v7" stroke="#18a838" stroke-width="2.4"/>
<circle cx="304.500" cy="44.500" r="5.2" fill="#d4d4d4" stroke="#c8c8c8" stroke-width="2"/><path d="M300.500 48.500l-4.500 4.500" stroke="#c0c0c0" stroke-width="2.4"/><path d="M308 38.500h7" stroke="#c8c8c8" stroke-width="2"/>
<path d="M331 43.5h6.5M342.5 43.5h6.5M340 35v6.5M340 46v6.5" stroke="#000" stroke-width="2.2"/>
<rect x="369.5" y="34.5" width="16" height="18" fill="#fff" stroke="#888"/><circle cx="377" cy="45" r="5" fill="#a8c8f0" stroke="#aaa" stroke-width="1.5"/><path d="M373 49l-4 4" stroke="#555" stroke-width="2"/>
<path d="M404 37h9l2 1.500-2 1.5h-9z" fill="#30c030"/><path d="M404 46h9l2 1.500-2 1.500h-9z" fill="#e03030"/><path d="M406 42h16M406 52h14" stroke="#ddd" stroke-width="1.5"/><rect x="414.5" y="36" width="4" height="18" fill="#30c030" stroke="#188018" stroke-width="0.6"/><rect x="419.500" y="46" width="3" height="8" fill="#e03030" stroke="#901010" stroke-width="0.6"/>
<rect x="433.5" y="34.5" width="18" height="18" fill="#e8e8e8" stroke="#888"/><path d="M437.500 36v16M443 35v14M448 37v16" stroke="#222" stroke-width="1.4"/><rect x="435.5" y="40" width="4" height="9" fill="#40d040"/><rect x="441" y="37" width="4" height="8" fill="#40d040"/><rect x="446" y="41" width="4" height="9" fill="#e03030"/>
<rect x="461.5" y="34.5" width="19" height="18" fill="#dcdcdc" stroke="#999"/><rect x="462" y="48" width="18" height="4" fill="#c4c4c4"/><path d="M463 42l3-3 3 1 3-4 3 2 4 2" stroke="#40b070" stroke-width="1.2" fill="none"/><path d="M463 47l3-2 3 1 3-3 3 1 4 3" stroke="#e04040" stroke-width="1.2" fill="none"/>
<path d="M493.500 35.500h10l4 4v13h-14z" fill="#fff" stroke="#999"/><text x="500.500" y="49" text-anchor="middle" font-family="Liberation Sans, sans-serif" font-weight="bold" font-size="13" fill="#20a030">$</text>
<rect x="520.5" y="34.5" width="16" height="18" fill="#f4f4f4" stroke="#999"/><rect x="522.5" y="36.500" width="12" height="3" fill="#58a8e8"/><rect x="522.5" y="41.500" width="3" height="9.500" fill="#b070f0" stroke="#8040c0" stroke-width="0.6"/><path d="M528 43h7M528 46h7M528 49h7" stroke="#c8d4e4" stroke-width="1.4"/>
</svg>

<div id="dlg">
<div class="abs ttl"><span>Indicators</span></div>
<div class="abs cls"><svg width="24" height="24"><path d="M9 9l6.500 6.500M15.500 9l-6.500 6.500" stroke="#fff" stroke-width="1.4"/></svg></div>
<div class="abs" style="left:1px;top:39px;width:711px;height:2.5px;background:#7c7c7c"></div>
<div class="abs" style="left:1px;top:40px;width:2px;height:480px;background:#9a9a9a"></div>
<div class="abs lb" style="left:3px;top:41px;width:313.5px;height:265px;">
<div class="it" style="top:2.00px">ADL</div>
<div class="it" style="top:18.25px">ADX</div>
<div class="it" style="top:34.50px">ADXR</div>
<div class="it" style="top:50.75px">APZ</div>
<div class="it" style="top:67.00px">Aroon</div>
<div class="it" style="top:83.25px">AroonOscillator</div>
<div class="it" style="top:99.50px">ATR</div>
<div class="it" style="top:115.75px">BarTimer</div>
<div class="it" style="top:132.00px">Bollinger</div>
<div class="it" style="top:148.25px">BOP</div>
<div class="it" style="top:164.50px">BuySellPressure</div>
<div class="it" style="top:180.75px">BuySellVolume</div>
<div class="it" style="top:197.00px">CandleStickPattern</div>
<div class="it" style="top:213.25px">CCI</div>
<div class="it" style="top:229.50px">ChaikinMoneyFlow</div>
<div class="it" style="top:245.75px">ChaikinOscillator</div>
<div class="abs" style="left:290px;top:1px;width:21px;height:261px;background:#f0f0f0"></div>
<div class="abs" style="left:290px;top:23px;width:18.5px;height:30px;background:#cdcdcd"></div>
<svg class="abs" style="left:290px;top:1px" width="21" height="261"><path d="M6 14l4.500-4.500 4.500 4.500M6 248l4.500 4.500 4.500-4.500" stroke="#505050" stroke-width="1.8" fill="none"/></svg>
</div>
<div class="abs lb" style="left:3px;top:313px;width:313.5px;height:151px;">
<div class="abs" style="left:1.500px;top:1.5px;width:309px;height:15px;background:#3399ff"></div>
<div class="it" style="top:1.30px;color:#fff">KAMA(FDAX 06-16 (1 Min),2,10,30)</div>
<div class="it" style="top:17.55px">SiADXVMA(FDAX 06-16 (1 Min),Color [Crimson],6,Color [DodgerBlue],0,08)</div>
<div class="it" style="top:33.80px">SiERI(FDAX 06-16 (1 Min),Normalize,EMA,13,3,0,7,3)</div>
<div class="it" style="top:50.05px">SiPPO(FDAX 06-16 (1 Min),12,EMA,26,9,3,0,7,3)</div>
</div>
<div class="abs btn" style="left:31px;top:484px;width:82.5px;height:28.5px;background:#cccccc;border-color:#bfbfbf;color:#a0a0a0;text-shadow:1px 1px 0 #fff">New</div>
<div class="abs btn" style="left:203px;top:484px;width:82px;height:28.5px;">Remove</div>
<div class="abs pg" style="left:386.3px;top:41px;width:324px;height:402px;">
<div class="row cat" style="top:1.5px"><div class="box"></div><b>Parameters</b></div>
<div class="row" style="top:21.5px"><div class="mg"></div><div class="nm">Fast</div><div class="dv"></div><div class="vl"><span>2</span></div></div>
<div class="row" style="top:41.5px"><div class="mg"></div><div class="nm">Period</div><div class="dv"></div><div class="vl"><span>10</span></div></div>
<div class="row" style="top:61.5px"><div class="mg"></div><div class="nm">Slow</div><div class="dv"></div><div class="vl"><span>30</span></div></div>
<div class="row cat" style="top:81.5px"><div class="box"></div><b>Data</b></div>
<div class="row" style="top:101.5px"><div class="mg"></div><div class="nm">Calculate on bar close</div><div class="dv"></div><div class="vl"><span>True</span></div></div>
<div class="row" style="top:121.5px"><div class="mg"></div><div class="nm">Input series</div><div class="dv"></div><div class="vl"><span style="transform:scaleX(1.09)">FDAX 06-16 (1 Min)</span></div></div>
<div class="row" style="top:141.5px"><div class="mg"></div><div class="nm">Maximum bars look back</div><div class="dv"></div><div class="vl"><span>TwoHundredFiftySix</span></div></div>
<div class="row cat" style="top:161.5px"><div class="box"></div><b>Visual</b></div>
<div class="row" style="top:181.5px"><div class="mg"></div><div class="nm">Auto scale</div><div class="dv"></div><div class="vl"><span>True</span></div></div>
<div class="row" style="top:201.5px"><div class="mg"></div><div class="nm">Displacement</div><div class="dv"></div><div class="vl"><span>0</span></div></div>
<div class="row" style="top:221.5px"><div class="mg"></div><div class="nm">Display in Data Box</div><div class="dv"></div><div class="vl"><span>True</span></div></div>
<div class="row" style="top:241.5px"><div class="mg"></div><div class="nm" style="background:#c8c8c8;width:134px">Label</div><div class="dv"></div><div class="vl"><span>KAMA</span></div></div>
<div class="row" style="top:261.5px"><div class="mg"></div><div class="nm">Panel</div><div class="dv"></div><div class="vl"><span>Same as input series</span></div></div>
<div class="row" style="top:281.5px"><div class="mg"></div><div class="nm">Price marker(s)</div><div class="dv"></div><div class="vl"><span>True</span></div></div>
<div class="row" style="top:301.5px"><div class="mg"></div><div class="nm">Scale justification</div><div class="dv"></div><div class="vl"><span>Right</span></div></div>
<div class="row cat" style="top:321.5px"><div class="box"></div><b>Plots</b></div>
<div class="row" style="top:341.5px"><div class="mg"><div class="box plus"></div></div><div class="nm">KAMA</div><div class="dv"></div><div class="vl"><svg class="abs" style="left:1px;top:1px" width="26" height="17"><rect x="0.500" y="0.500" width="24" height="15" fill="#fff" stroke="#222"/><path d="M1.500 13l5-8 5 4 5-5.500 7.500 0" stroke="#1e90ff" stroke-width="1.8" fill="none"/></svg><span style="left:37px">Line; Solid; 3px</span></div></div>
</div>
<div class="abs" style="left:386.3px;top:447px;width:324px;height:73px;border:1px solid #a0a0a0;background:#f0f0f0;overflow:hidden"><b style="position:absolute;left:6px;top:3px;line-height:16px;transform:scaleX(1.04);transform-origin:0 50%">Label</b><div style="position:absolute;left:6px;top:20.5px;line-height:16.3px;width:330px;white-space:pre;transform:scaleX(0.99);transform-origin:0 0">Developed by Perry Kaufman, this indicator is an
EMA using an Efficiency Ratio to modify the sm...</div></div>
<div class="abs" style="left:0;top:520px;width:713px;height:1px;background:#fafafa"></div>
<div class="abs btn" style="left:111px;top:559px;width:99px;height:28.5px;border:2px solid #0078d7;line-height:24.5px">OK</div>
<div class="abs btn" style="left:308px;top:559px;width:97px;height:28.5px;">Apply</div>
<div class="abs btn" style="left:504.5px;top:559px;width:97px;height:28.5px;">Close</div>
<svg class="abs" style="left:700px;top:591px" width="12" height="12"><path d="M9 1h2v2h-2zM9 5h2v2h-2zM9 9h2v2h-2zM5 5h2v2h-2zM5 9h2v2h-2zM1 9h2v2h-2z" fill="#b8b8b8"/></svg>
</div>
</body></html>
